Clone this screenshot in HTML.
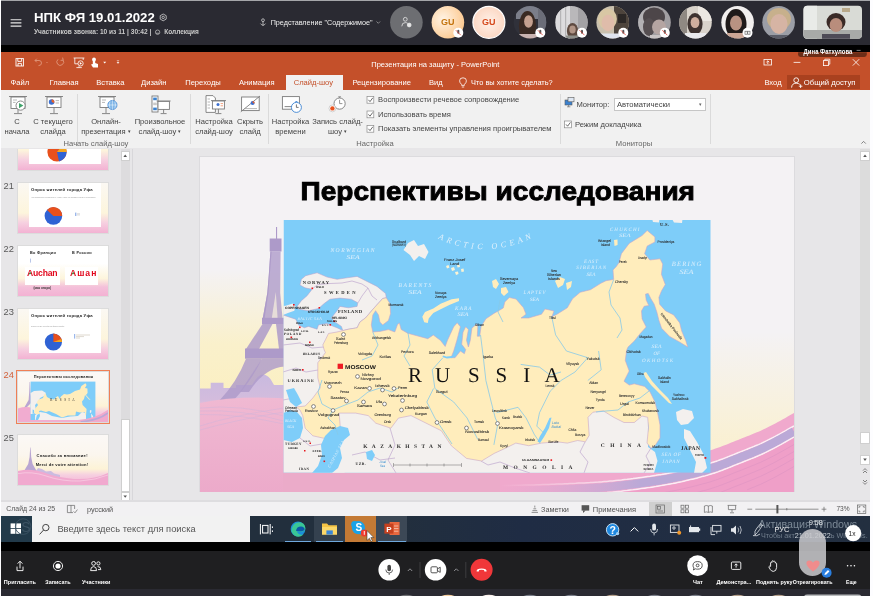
<!DOCTYPE html>
<html lang="ru">
<head>
<meta charset="utf-8">
<title>НПК ФЯ 19.01.2022</title>
<style>
html,body{margin:0;padding:0;}
body{width:873px;height:596px;overflow:hidden;background:#000;font-family:"Liberation Sans",sans-serif;}
#root{position:relative;width:873px;height:596px;overflow:hidden;background:#000;filter:blur(0.45px);}
.a{position:absolute;}
.t{position:absolute;white-space:nowrap;line-height:1;}
.c{text-align:center;}
/* top webinar bar */
#topbar{left:0;top:0;width:870px;height:44.5px;background:#2a2a32;}
#topline{left:1px;top:0;width:869px;height:1.1px;background:#a5a6aa;}
#rstrip{left:870.2px;top:0;width:3px;height:596px;background:#fdfdff;}
#lstrip{left:0;top:0;width:1.1px;height:596px;background:#fdfdff;}
/* powerpoint */
#pptitle{left:1px;top:52.3px;width:869px;height:38.7px;background:#c4502a;}
#ribbon{left:1px;top:90px;width:869px;height:59px;background:#f1f1f1;}
#work{left:1px;top:148px;width:869px;height:354px;background:#e7e6e8;}
#status{left:1px;top:502px;width:869px;height:15px;background:#f2f1f3;}
#taskbar{left:1px;top:516px;width:869px;height:26px;background:linear-gradient(to right,#222f3d 0%,#222f3d 45%,#1f2c44 60%,#232f40 100%);}
#botbar{left:1px;top:550.5px;width:869px;height:38.5px;background:#1f1f21;}
#botstrip{left:1px;top:588.7px;width:869px;height:8px;background:#2a2a32;}
.rt{font-size:7.6px;color:#444;}
.tab{font-size:7.6px;color:#fff;top:79px;}
.sep{position:absolute;width:1px;background:#dadada;top:94px;height:50px;}
.num{font-size:9.3px;color:#5a5a5a;left:3.6px;}
.thumb{position:absolute;left:19px;width:88px;height:50px;background:#fff;overflow:hidden;}
.bl{font-size:6.6px;color:#fff;top:578px;font-weight:bold;letter-spacing:-0.3px}
.sea{font-family:"Liberation Serif",serif;font-style:italic;fill:#dff0fc;}
.cty{font-family:"Liberation Serif",serif;font-weight:bold;fill:#2a2a2a;}
.cap{font-family:"Liberation Sans",sans-serif;font-weight:bold;fill:#111;}
.cit{font-family:"Liberation Sans",sans-serif;fill:#2a2a2a;stroke:#2a2a2a;stroke-width:0.08px;}
.lake{font-family:"Liberation Sans",sans-serif;font-style:italic;fill:#3a8fd0;}
.rus{font-family:"Liberation Serif",serif;fill:#111;}
.thumb{left:18px;width:89.5px;height:50px;outline:0.5px solid #dcdcdc;}
.tb{background:linear-gradient(to bottom,#fbf8f3 0%,#fdf5dc 60%,#f6cfe0 80%,#f3b2d3 100%);}
.tb2{background:linear-gradient(to bottom,#fff 0%,#fff 35%,#fdf5dc 65%,#f4c0da 82%,#f3b2d3 100%);}
.tb3{background:linear-gradient(to bottom,#fbf8f6 0%,#fbf6ee 40%,#fdf3d6 68%,#f6cfe0 80%,#f3b2d3 100%);}
</style>
</head>
<body>
<div id="root">
<div class="a" id="topbar"></div>
<div class="a" id="pptitle"></div>
<div class="a" id="ribbon"></div>
<div class="a" id="work"></div>
<div class="a" id="status"></div>
<div class="a" id="taskbar"></div>
<div class="a" id="botbar"></div>
<div class="a" id="botstrip"></div>
<!--TOPBAR-->
<svg class="a" style="left:0;top:0" width="873" height="60" viewBox="0 0 873 60">
<g stroke="#e8e8e8" stroke-width="1.1"><path d="M10.6 19.7 H21.4 M10.6 22.9 H21.4 M10.6 26.1 H21.4"/></g>
<g fill="none" stroke="#d0d0d0" stroke-width="0.8"><path d="M163.2 14 L166.2 15.7 L166.2 19.1 L163.2 20.8 L160.2 19.1 L160.2 15.7 Z"/><circle cx="163.2" cy="17.4" r="1.2"/></g>
<g fill="none" stroke="#c8c8c8" stroke-width="0.7"><circle cx="157.6" cy="32.2" r="2.2"/><path d="M156 33.2 H159"/></g>
<g fill="none" stroke="#e0e0e0" stroke-width="0.7"><circle cx="263" cy="20.2" r="1.4"/><path d="M263 21.6 V25.6 M260.5 23.6 Q263 27 265.5 23.6"/></g>
<path d="M376.5 21.5 L378.3 23.3 L380.1 21.5" stroke="#aaa" stroke-width="0.7" fill="none"/>
<defs>
<radialGradient id="gu1" cx="0.35" cy="0.4" r="0.7"><stop offset="0" stop-color="#fff3e4"/><stop offset="1" stop-color="#fcc88e"/></radialGradient>
<radialGradient id="gu2" cx="0.5" cy="0.5" r="0.6"><stop offset="0" stop-color="#fff1e8"/><stop offset="1" stop-color="#fbd3bd"/></radialGradient>
<clipPath id="av1"><circle cx="530" cy="22.3" r="16.3"/></clipPath>
<clipPath id="av2"><circle cx="571.4" cy="22.3" r="16.3"/></clipPath>
<clipPath id="av3"><circle cx="612.7" cy="22.3" r="16.3"/></clipPath>
<clipPath id="av4"><circle cx="654.5" cy="22.3" r="16.3"/></clipPath>
<clipPath id="av5"><circle cx="695.5" cy="22.3" r="16.3"/></clipPath>
<clipPath id="av6"><circle cx="737.6" cy="22.3" r="16.3"/></clipPath>
<clipPath id="av7"><circle cx="778.6" cy="22.3" r="16.3"/></clipPath>
<clipPath id="av8"><rect x="803.5" y="5.7" width="58.5" height="33" rx="4"/></clipPath>
</defs>
<circle cx="406.4" cy="22.3" r="16.3" fill="#6d6e72"/>
<g fill="none" stroke="#e8e8e8" stroke-width="0.8"><circle cx="405.3" cy="19.3" r="1.9"/><path d="M401.8 26.3 Q401.8 22.6 405.3 22.6 Q407 22.6 407.8 23.4"/><circle cx="409.2" cy="25" r="1.9" fill="#e8e8e8"/></g>
<circle cx="447.9" cy="22.3" r="16.3" fill="url(#gu1)"/>
<circle cx="488.9" cy="22.3" r="16" fill="url(#gu2)" stroke="#fff" stroke-width="1.2"/>
<!-- photo avatars -->
<g clip-path="url(#av1)"><rect x="513" y="5" width="34" height="35" fill="#30313a"/><rect x="516" y="5" width="31" height="14" fill="#7b7e8a"/><rect x="538" y="5" width="10" height="30" fill="#6b6d78"/><ellipse cx="527.5" cy="26" rx="8.6" ry="15" fill="#3a2a23"/><ellipse cx="528.5" cy="21.5" rx="4.4" ry="6.2" fill="#c5a190"/><rect x="519" y="34" width="18" height="7" fill="#c9b3b0"/></g>
<g clip-path="url(#av2)"><rect x="554" y="5" width="35" height="35" fill="#b9b8ba"/><rect x="556" y="5" width="14" height="35" fill="#dddcde"/><rect x="560" y="5" width="1.2" height="35" fill="#b5b4b6"/><rect x="565" y="5" width="1.2" height="35" fill="#b5b4b6"/><rect x="578" y="5" width="11" height="35" fill="#a3a2a5"/><ellipse cx="572.5" cy="31" rx="5.6" ry="8" fill="#5e4a40"/><ellipse cx="572.5" cy="29.5" rx="3.2" ry="4" fill="#b09485"/><rect x="566" y="35.5" width="13" height="4" fill="#8d8f8a"/></g>
<g clip-path="url(#av3)"><rect x="595" y="5" width="35" height="35" fill="#c9c0ae"/><rect x="614" y="5" width="16" height="35" fill="#4d443c"/><rect x="618" y="14" width="8" height="9" fill="#2c2826"/><ellipse cx="607.5" cy="19" rx="9.4" ry="10.5" fill="#d8c7a4"/><ellipse cx="608" cy="23" rx="6.4" ry="8.2" fill="#dfbcaa"/><rect x="598" y="33.5" width="22" height="7" fill="#dfe4ee"/></g>
<g clip-path="url(#av4)"><rect x="637" y="5" width="35" height="35" fill="#a29fa2"/><rect x="637" y="5" width="12" height="35" fill="#b3b1b4"/><ellipse cx="654" cy="17" rx="11" ry="9.5" fill="#4d4649"/><ellipse cx="649" cy="27" rx="6" ry="9" fill="#554e51"/><ellipse cx="659" cy="27" rx="7" ry="7.6" fill="#b5a5a2"/><rect x="650" y="35" width="20" height="5" fill="#c9c4c4"/></g>
<g clip-path="url(#av5)"><rect x="678" y="5" width="35" height="35" fill="#d9d3cb"/><rect x="678" y="5" width="9" height="35" fill="#8f8983"/><rect x="698" y="5" width="15" height="16" fill="#ece8e2"/><ellipse cx="695" cy="24" rx="7.6" ry="11" fill="#3d3230"/><ellipse cx="695" cy="22.5" rx="4.4" ry="5.6" fill="#cfae9e"/><rect x="685" y="33" width="21" height="8" fill="#e9e9ec"/></g>
<g clip-path="url(#av6)"><rect x="720" y="5" width="36" height="35" fill="#f1efee"/><ellipse cx="736" cy="24" rx="10.5" ry="15" fill="#1f1a1a"/><ellipse cx="736" cy="23" rx="6" ry="7.6" fill="#b99282"/><rect x="727" y="33" width="18" height="8" fill="#caa595"/></g>
<g clip-path="url(#av7)"><rect x="761" y="5" width="36" height="35" fill="#9b9ea6"/><ellipse cx="779" cy="19" rx="12" ry="11" fill="#c7b08c"/><ellipse cx="779" cy="24" rx="8.6" ry="10" fill="#d6b4a4"/><rect x="766" y="35" width="26" height="6" fill="#5a5d68"/></g>
<g clip-path="url(#av8)"><rect x="803" y="5" width="60" height="34" fill="#d9dbd6"/><rect x="803" y="5" width="14" height="34" fill="#e9ebe8"/><rect x="842" y="8" width="8" height="4" fill="#b9a98a"/><rect x="803" y="30" width="60" height="9" fill="#a8aaa8"/><ellipse cx="836" cy="22" rx="9.5" ry="9" fill="#3a2a26"/><ellipse cx="836" cy="25" rx="6.4" ry="7" fill="#b98d7c"/><rect x="822" y="34" width="28" height="6" fill="#4e4b57"/></g>
<!-- mute badges -->
<g fill="#fff"><circle cx="458.3" cy="32.7" r="5"/><circle cx="540.3" cy="32.7" r="5"/><circle cx="582" cy="32.7" r="5"/><circle cx="623.3" cy="32.7" r="5"/><circle cx="664.8" cy="32.7" r="5"/><circle cx="747.5" cy="32.7" r="5"/></g>
<g fill="#555"><rect x="457.3" y="29.8" width="2" height="4" rx="1"/><rect x="539.3" y="29.8" width="2" height="4" rx="1"/><rect x="581" y="29.8" width="2" height="4" rx="1"/><rect x="622.3" y="29.8" width="2" height="4" rx="1"/><rect x="663.8" y="29.8" width="2" height="4" rx="1"/></g>
<g stroke="#e0453a" stroke-width="0.8"><path d="M455.8 30.2 L460.8 35.2 M537.8 30.2 L542.8 35.2 M579.5 30.2 L584.5 35.2 M620.8 30.2 L625.8 35.2 M662.3 30.2 L667.3 35.2"/></g>
<g fill="none" stroke="#555" stroke-width="0.6"><rect x="745" y="31.2" width="2.2" height="3"/><rect x="747.8" y="31.2" width="2.2" height="3"/></g>
<!-- tooltip -->
<path d="M798.1 52.3 H866.8 V54.6 Q866.8 57 864.4 57 H800.5 Q798.1 57 798.1 54.6 Z" fill="#6b2d17"/>
<text x="803.6" y="53.9" font-family="'Liberation Sans',sans-serif" font-weight="bold" font-size="7" fill="#fff" textLength="48.8" lengthAdjust="spacingAndGlyphs">Дина Фатхулова</text>
<path d="M856.6 50.4 H860.6" stroke="#ccc" stroke-width="0.6"/>
</svg>
<div class="t" style="left:34px;top:11.2px;font-size:13.2px;font-weight:bold;color:#fff;">НПК ФЯ 19.01.2022</div>
<div class="t" style="left:34px;top:29px;font-size:6.6px;font-weight:bold;color:#c9c9c9;">Участников звонка: 10 из 11 | 30:42 |</div>
<div class="t" style="left:164.3px;top:29px;font-size:6.5px;font-weight:bold;color:#c9c9c9;">Коллекция</div>
<div class="t" style="left:270.7px;top:19px;font-size:7.2px;color:#f0f0f0;">Представление "Содержимое"</div>
<div class="t" style="left:441px;top:17.6px;font-size:9px;font-weight:bold;color:#c4740e;">GU</div>
<div class="t" style="left:482px;top:17.6px;font-size:9px;font-weight:bold;color:#d5491c;">GU</div>
<!--/TOPBAR-->
<!--PPT-->
<div class="a" style="left:285.6px;top:74.7px;width:57.2px;height:16px;background:#f1f1f1;"></div>
<div class="a" style="left:787.4px;top:75.2px;width:73px;height:14px;background:#a9411f;"></div>
<div class="t" style="left:371.3px;top:60.5px;font-size:7.5px;color:#fff;">Презентация на защиту - PowerPoint</div>
<div class="t tab" style="left:10.6px;">Файл</div>
<div class="t tab" style="left:49.6px;">Главная</div>
<div class="t tab" style="left:96.3px;">Вставка</div>
<div class="t tab" style="left:141px;">Дизайн</div>
<div class="t tab" style="left:185.2px;">Переходы</div>
<div class="t tab" style="left:239px;">Анимация</div>
<div class="t tab" style="left:293.7px;color:#c4502a;">Слайд-шоу</div>
<div class="t tab" style="left:352.4px;">Рецензирование</div>
<div class="t tab" style="left:428.9px;">Вид</div>
<div class="t tab" style="left:471px;font-size:7.4px;top:79.2px">Что вы хотите сделать?</div>
<div class="t tab" style="left:764.4px;">Вход</div>
<div class="t tab" style="left:803.8px;font-size:7.7px;">Общий доступ</div>
<svg class="a" style="left:0;top:53px" width="873" height="38" viewBox="0 53 873 38">
<!-- quick access -->
<g fill="none" stroke="#fff" stroke-width="0.9"><rect x="16" y="58.6" width="7.4" height="7.4"/><path d="M17.8 58.6 V61.4 H21.6 V58.6 M18 66 V63.4 H21.4 V66"/></g>
<g fill="none" stroke="#e0967a" stroke-width="0.9"><path d="M35 60.5 H39 Q41.5 60.5 41.5 63 Q41.5 65.6 38.5 65.6 M35 60.5 L36.8 58.7 M35 60.5 L36.8 62.3"/><path d="M63 60 A3.4 3.4 0 1 1 58 59.4 M62.6 57.6 L63.2 60.2 L60.6 60.4"/></g>
<circle cx="47" cy="62.5" r="0.6" fill="#e0967a"/>
<g fill="none" stroke="#fff" stroke-width="0.8"><path d="M73.6 58 H84.4 M74.8 58 V63.8 H78 M83.2 58 V60"/><circle cx="80.6" cy="63.4" r="2.6"/><path d="M79.8 62 L82 63.4 L79.8 64.8 Z" fill="#fff" stroke="none"/><path d="M79 66.2 V67.4 M76.4 67.6 H81.8"/></g>
<g fill="#fff"><circle cx="94" cy="59.4" r="1.9"/><path d="M92.8 60.5 H95.2 V63 L98 64 V67.6 H93 L91 64.6 L92.8 64 Z"/></g>
<path d="M103.2 61.8 L106.2 61.8 L104.7 63.5 Z" fill="#fff"/>
<path d="M116.8 60.6 H119.2 M117 62.2 L118 63.4 L119 62.2 Z" stroke="#fff" stroke-width="0.5" fill="#fff"/>
<!-- lightbulb -->
<g fill="none" stroke="#fff" stroke-width="0.8"><path d="M461.6 85.4 V84.4 Q459.6 82.8 459.6 80.8 Q459.6 77.8 463 77.8 Q466.4 77.8 466.4 80.8 Q466.4 82.8 464.4 84.4 V85.4 Z M461.8 87 H464.2"/></g>
<!-- window buttons -->
<g fill="none" stroke="#fff" stroke-width="0.8"><rect x="764" y="59.4" width="7.6" height="5.6"/><path d="M767.8 64 V61 M766.4 62.2 L767.8 60.8 L769.2 62.2"/><path d="M793.6 62.4 H800.4"/><rect x="823.4" y="60.6" width="5" height="5"/><path d="M824.8 60.6 V59.2 H829.8 V64.2 H828.4"/><path d="M852.8 59.2 L859.2 65.6 M859.2 59.2 L852.8 65.6"/></g>
<!-- share icon -->
<g fill="none" stroke="#fff" stroke-width="0.9"><circle cx="796.2" cy="80.2" r="2.4"/><path d="M791.6 87.6 Q791.8 83.2 796.2 83.2 Q798.6 83.2 799.8 84.4 M798.8 86.2 H802.4 M800.6 84.4 V88"/></g>
</svg>
<!--/PPT-->
<!--RIBBON-->
<div class="sep" style="left:76.7px"></div><div class="sep" style="left:190.4px"></div><div class="sep" style="left:267.8px"></div><div class="sep" style="left:560px"></div><div class="sep" style="left:710px"></div>
<div class="t rt c" style="left:-3px;width:40px;top:118px;">С</div>
<div class="t rt c" style="left:-3px;width:40px;top:128.4px;">начала</div>
<div class="t rt c" style="left:28px;width:50px;top:118px;">С текущего</div>
<div class="t rt c" style="left:28px;width:50px;top:128.4px;">слайда</div>
<div class="t rt c" style="left:76px;width:60px;top:118px;">Онлайн-</div>
<div class="t rt c" style="left:76px;width:60px;top:128.4px;">презентация <span style="font-size:5px;vertical-align:1px">▾</span></div>
<div class="t rt c" style="left:130px;width:60px;top:118px;">Произвольное</div>
<div class="t rt c" style="left:130px;width:60px;top:128.4px;">слайд-шоу <span style="font-size:5px;vertical-align:1px">▾</span></div>
<div class="t rt c" style="left:189px;width:50px;top:118px;">Настройка</div>
<div class="t rt c" style="left:189px;width:50px;top:128.4px;">слайд-шоу</div>
<div class="t rt c" style="left:230px;width:40px;top:118px;">Скрыть</div>
<div class="t rt c" style="left:230px;width:40px;top:128.4px;">слайд</div>
<div class="t rt c" style="left:265.5px;width:50px;top:118px;">Настройка</div>
<div class="t rt c" style="left:265.5px;width:50px;top:128.4px;">времени</div>
<div class="t rt c" style="left:307.5px;width:60px;top:118px;">Запись слайд-</div>
<div class="t rt c" style="left:307.5px;width:60px;top:128.4px;">шоу <span style="font-size:5px;vertical-align:1px">▾</span></div>
<div class="t rt" style="left:378.1px;top:96.2px;">Воспроизвести речевое сопровождение</div>
<div class="t rt" style="left:378.1px;top:110.7px;">Использовать время</div>
<div class="t rt" style="left:378.1px;top:125.2px;">Показать элементы управления проигрывателем</div>
<div class="t rt" style="left:576.4px;top:101.2px;">Монитор:</div>
<div class="a" style="left:613.5px;top:98px;width:92px;height:13.4px;background:#fff;border:0.6px solid #c6c6c6;box-sizing:border-box;"></div>
<div class="t rt" style="left:617px;top:101.2px;">Автоматически</div>
<div class="t rt" style="left:699px;top:101.5px;font-size:5px;color:#666">▾</div>
<div class="t rt" style="left:575px;top:120.7px;">Режим докладчика</div>
<div class="t rt c" style="left:56px;width:80px;top:140.4px;color:#666;">Начать слайд-шоу</div>
<div class="t rt c" style="left:345px;width:60px;top:140.4px;color:#666;">Настройка</div>
<div class="t rt c" style="left:604px;width:60px;top:140px;color:#666;">Мониторы</div>
<svg class="a" style="left:0;top:90px" width="873" height="59" viewBox="0 90 873 59">
<!-- checkboxes -->
<g fill="#fff" stroke="#8a8a8a" stroke-width="0.7"><rect x="367" y="96.4" width="6.8" height="6.8"/><rect x="367" y="111" width="6.8" height="6.8"/><rect x="367" y="125.4" width="6.8" height="6.8"/><rect x="564.6" y="121" width="6.8" height="6.8"/></g>
<g fill="none" stroke="#444" stroke-width="0.8"><path d="M368.4 99.8 L370 101.6 L372.8 97.8 M368.4 114.4 L370 116.2 L372.8 112.4 M368.4 128.8 L370 130.6 L372.8 126.8 M566 124.4 L567.6 126.2 L570.4 122.4"/></g>
<!-- icon 1: from beginning -->
<g fill="#fff" stroke="#7a7a7a" stroke-width="0.9">
<path d="M9 96.5 H27"/><rect x="11" y="97" width="14" height="11.5"/><path d="M18 108.5 V113 M14 113.6 H22"/>
<circle cx="20.6" cy="105.6" r="4.6"/>
</g>
<path d="M19 103 L23.4 105.6 L19 108.2 Z" fill="#3fa36b"/>
<path d="M13 100 H17 M13 102.4 H15.6" stroke="#9a9a9a" stroke-width="0.7"/>
<!-- icon 2 -->
<g fill="#fff" stroke="#7a7a7a" stroke-width="0.9"><path d="M45 96.5 H63"/><rect x="47" y="97" width="14" height="10.5"/><path d="M54 107.5 V113 M50 113.6 H58"/></g>
<circle cx="51.6" cy="102" r="2.8" fill="#3b6fd0"/><path d="M51.6 102 L51.6 99.2 A2.8 2.8 0 0 1 54.2 103 Z" fill="#e8632a"/>
<path d="M55.6 100.6 H59 M55.6 103 H59" stroke="#9a9a9a" stroke-width="0.7"/>
<!-- icon 3 -->
<g fill="#fff" stroke="#7a7a7a" stroke-width="0.9"><path d="M98 96.5 H116"/><rect x="100" y="97" width="14" height="10.5"/><path d="M106 107.5 V113 M102 113.6 H110"/></g>
<path d="M102 100 H106 M102 102.4 H105" stroke="#9a9a9a" stroke-width="0.7"/>
<circle cx="112.4" cy="105" r="4.6" fill="#7fb6e8" stroke="#3b82d0" stroke-width="0.7"/><path d="M107.8 105 H117 M112.4 100.4 V109.6 M110 101.4 Q108.6 105 110 108.6 M114.8 101.4 Q116.2 105 114.8 108.6" stroke="#fff" stroke-width="0.5" fill="none"/>
<!-- icon 4 -->
<g fill="#fff" stroke="#7a7a7a" stroke-width="0.9"><rect x="152" y="96" width="6" height="16"/><path d="M156.6 101 H170.6"/><rect x="158" y="101.4" width="11.4" height="8"/><path d="M163.6 109.4 V113 M160.6 113.6 H166.6"/></g>
<rect x="153.2" y="97.6" width="3.6" height="2.6" fill="#3b82d0"/><rect x="153.2" y="107.6" width="3.6" height="2.6" fill="#3b82d0"/><rect x="153.2" y="102.6" width="3.6" height="2.6" fill="#c9c9c9"/>
<!-- icon 5: setup -->
<g fill="#fff" stroke="#7a7a7a" stroke-width="0.9"><path d="M206 95.6 H213 L215.4 98 V112.4 H206 Z"/><path d="M211 100.6 H226"/><rect x="212.4" y="101" width="12" height="8"/><path d="M218.4 109 V113 M215.4 113.6 H221.4"/></g>
<path d="M207.6 99 H210 M207.6 102 H210 M207.6 105 H210 M207.6 108 H210" stroke="#9a9a9a" stroke-width="0.7"/>
<circle cx="218" cy="104.6" r="1.5" fill="#3b6fd0"/><path d="M220.6 103.6 H223 M220.6 105.8 H223" stroke="#e8632a" stroke-width="0.6"/>
<!-- icon 6: hide slide -->
<g fill="#fff" stroke="#7a7a7a" stroke-width="0.9"><rect x="241.6" y="97" width="17.6" height="13.6"/><path d="M240.8 111.8 L260 96" fill="none"/></g>
<path d="M244 108.6 H257" stroke="#9a9a9a" stroke-width="0.7"/><circle cx="252.6" cy="103" r="2" fill="#3b6fd0"/><path d="M252.6 103 V101 A2 2 0 0 1 254.5 103.6 Z" fill="#e8632a"/>
<!-- icon 7: rehearse -->
<g fill="#fff" stroke="#7a7a7a" stroke-width="0.9"><rect x="282.4" y="96.6" width="17" height="12.6"/><path d="M284.6 106.6 H293" fill="none"/></g>
<circle cx="296.4" cy="107.4" r="5" fill="#fff" stroke="#3b82d0" stroke-width="0.9"/><path d="M296.4 104.4 V107.4 H298.6" stroke="#555" stroke-width="0.8" fill="none"/><path d="M295.4 101.6 H297.4" stroke="#3b82d0" stroke-width="0.9"/>
<!-- icon 8: record -->
<circle cx="339.6" cy="103.6" r="5.6" fill="#fff" stroke="#7a7a7a" stroke-width="0.9"/><path d="M339.6 99.8 V103.6 H342.4 M338.2 96.8 H341 M339.6 96.8 V98" stroke="#7a7a7a" stroke-width="0.8" fill="none"/>
<circle cx="332.4" cy="108.4" r="3.4" fill="#fff" stroke="#aaa" stroke-width="0.5"/><circle cx="332.4" cy="108.4" r="2.2" fill="#e8531f"/>
<!-- monitor icon -->
<g stroke="#5a5a5a" stroke-width="0.6"><rect x="565" y="100" width="7" height="5" fill="#3b82d0"/><rect x="568" y="97.6" width="6" height="4.2" fill="#dfe8f4"/><path d="M567 106.8 H570.4 M568.6 105 V106.8" fill="none"/></g>
<path d="M861.4 143.6 L863.6 141.4 L865.8 143.6" stroke="#666" stroke-width="0.8" fill="none"/>
</svg>
<!--/RIBBON-->
<!--PANEL-->
<div class="a" style="left:120.5px;top:149px;width:9.5px;height:352px;background:#dddcde;"></div>
<div class="a" style="left:120.5px;top:151px;width:9.5px;height:9.5px;background:#fff;border:0.5px solid #cfcfcf;box-sizing:border-box;"></div>
<div class="a" style="left:120.5px;top:418.6px;width:9.5px;height:73px;background:#fff;border:0.5px solid #cfcfcf;box-sizing:border-box;"></div>
<div class="a" style="left:120.5px;top:492px;width:9.5px;height:9px;background:#fff;border:0.5px solid #cfcfcf;box-sizing:border-box;"></div>
<div class="a" style="left:131.6px;top:149px;width:1px;height:353px;background:#d8d7da;"></div>
<svg class="a" style="left:120px;top:149px" width="11" height="353" viewBox="120 149 11 353"><path d="M123.4 157 L125.2 154.6 L127 157 Z M123.4 495.4 L125.2 497.8 L127 495.4 Z" fill="#555"/></svg>
<div class="t num" style="top:181.6px;">21</div><div class="t num" style="top:244.6px;">22</div><div class="t num" style="top:307.6px;">23</div><div class="t num" style="top:370.6px;color:#d2603a;">24</div><div class="t num" style="top:433.6px;">25</div>
<!-- 20 -->
<div class="a" style="left:0;top:149px;width:120px;height:30px;overflow:hidden;"><div class="thumb tb" style="top:-29.4px;"><div class="a" style="left:11px;top:0;width:72px;height:44px;background:#fff;"></div>
<svg class="a" style="left:0;top:0" width="89" height="50" viewBox="0 0 89 50"><circle cx="39" cy="32" r="9.6" fill="#e8501c"/><path d="M39 32 L48.6 32 A9.6 9.6 0 0 1 41 41.4 Z" fill="#2f62d4"/><path d="M39 32 L45 24.6 A9.6 9.6 0 0 1 48.6 32 Z" fill="#f2a51e"/></svg></div></div>
<!-- 21 -->
<div class="thumb tb" style="top:182.6px;"><div class="a" style="left:11px;top:0;width:72px;height:44.6px;background:#fff;"></div>
<div class="t" style="left:13px;top:5.4px;font-size:4.2px;font-weight:bold;color:#222;letter-spacing:0.2px;">Опрос жителей города Уфа</div>
<div class="t" style="left:13px;top:14.6px;font-size:1.8px;color:#999;">Что привлекает россиянина в Ашане, какие его преимущества и недостатки?</div>
<svg class="a" style="left:0;top:0" width="89" height="50" viewBox="0 0 89 50"><circle cx="35.4" cy="33" r="8.8" fill="#2f62d4"/><path d="M35.4 33 L29 27 A8.8 8.8 0 0 1 44.2 33 Z" fill="#e8501c"/><rect x="57" y="29.6" width="1.4" height="3.4" fill="#9bb7ea"/><rect x="59" y="30" width="3" height="2.6" fill="#e4e4e4"/></svg></div>
<!-- 22 -->
<div class="thumb tb2" style="top:245.6px;">
<div class="a" style="left:7px;top:21px;width:35px;height:18px;background:#fff;"></div><div class="a" style="left:47px;top:21px;width:33px;height:18px;background:#fff;"></div>
<div class="t" style="left:12px;top:6.4px;font-size:3.8px;font-weight:bold;color:#222;letter-spacing:0.3px;">Во Франции</div>
<div class="t" style="left:54px;top:6.4px;font-size:3.8px;font-weight:bold;color:#222;letter-spacing:0.3px;">В России</div>
<div class="t" style="left:9px;top:23.4px;font-size:8.6px;font-weight:bold;color:#e2061c;letter-spacing:-0.2px;">Auchan</div>
<div class="t" style="left:52px;top:23.4px;font-size:8.6px;font-weight:bold;color:#e2061c;letter-spacing:1px;">Ашан</div>
<div class="t" style="left:15.4px;top:41.2px;font-size:3px;font-weight:bold;color:#333;">(моя опора)</div>
<svg class="a" style="left:0;top:0" width="89" height="50" viewBox="0 0 89 50"><path d="M10.4 28.6 L12.6 25.6 L13 28 Z M53.4 28.6 L55.6 25.6 L56 28 Z" fill="#3f9a4b"/><rect x="12.4" y="12.6" width="0.6" height="4" fill="#8aa0d8"/></svg></div>
<!-- 23 -->
<div class="thumb tb" style="top:308.6px;"><div class="a" style="left:11px;top:0;width:72px;height:44px;background:#fff;"></div>
<div class="t" style="left:13px;top:5.4px;font-size:4.2px;font-weight:bold;color:#222;letter-spacing:0.2px;">Опрос жителей города Уфа</div>
<div class="t" style="left:13px;top:17px;font-size:1.8px;color:#999;">Готовы ли вы перейти на французский?</div>
<svg class="a" style="left:0;top:0" width="89" height="50" viewBox="0 0 89 50"><circle cx="35.4" cy="33" r="8.6" fill="#2f62d4"/><path d="M35.4 33 L35.4 24.4 A8.6 8.6 0 0 1 44 33 Z" fill="#e8501c"/><path d="M35.4 33 L43.4 30 A8.6 8.6 0 0 1 44 33 Z" fill="#f2a51e"/><rect x="56" y="25" width="1.2" height="4.6" fill="#9bb7ea"/><path d="M58 26 H72 M58 27.6 H66 M58 29 H62" stroke="#c9c0b0" stroke-width="0.6"/></svg></div>
<!-- 24 selected -->
<div class="a" style="left:16px;top:370px;width:93.5px;height:54px;background:#ef7f55;"></div>
<div class="thumb tb3" style="top:371.8px;left:17.8px;width:90px;height:50.4px;">
<div class="t" style="left:16px;top:3.4px;font-size:3.9px;font-weight:bold;color:#222;letter-spacing:0.2px;">Перспективы исследования</div>
<svg class="a" style="left:0;top:0" width="90" height="50.4" viewBox="0 0 90 50.4">
<path d="M11.6 10 L12 10 L12.6 22 L14 30 L8 36 L6 36 L10.6 28 L11.2 20 Z" fill="#b9a6d2"/>
<path d="M0 36.6 Q8 34 14 36 L14 50.4 L0 50.4 Z" fill="#f1acd0"/>
<rect x="12.6" y="9.6" width="64.8" height="38.4" fill="#7ecdf9"/>
<path d="M12.6 21 L16 19 L24 18.4 L28 21 L26 24 L22 26 L20 30 L17 33 L18 38 L16 42 L12.6 42 Z" fill="#f3f0ee"/>
<path d="M17 43 L22 40 L28 41 L34 44 L44 46 L52 44.6 L60 44 L64 40 L68 41 L68 48 L17 48 Z" fill="#f3f0ee"/>
<path d="M27.6 21.4 L29 25 L31.6 26.6 L36 27.4 L38.4 25 L40 24 L41.6 27 L43 24.6 L46 22 L49 22.6 L52 22 L57 19 L62 17.4 L63.4 14 L67.4 11.2 L68.6 13 L67 16 L69.4 16.6 L69.6 21 L68 23 L72.6 28 L71 27.6 L67 23 L66 27 L64 29.6 L64.6 33 L68.6 37 L68 43.6 L67 43 L67 40 L62 40.6 L58 39.6 L57.4 43.4 L50 43.6 L44 45.6 L38 42 L31 39 L28 40 L23 38.6 L21 39 L21.6 42 L17 42 L16 39.6 L17.6 36 L20 33 L18.6 30.6 L20.6 27.6 L25 26 L26 23 Z" fill="#ffedbc"/>
<path d="M14.6 37.4 L16 38 L16 41.6 L14.6 42 Z M19 43 L21.6 41.6 L22 44 L20 48 L17.6 48 Z" fill="#7ecdf9"/>
<path d="M72 38 L73.6 38.6 L73 41 L71.8 40.4 Z M73 41.6 L75 44 L75.6 47 L74 48 L73.4 45 Z" fill="#f3f0ee"/>
<path d="M60 48 Q78 46.6 90 37.8 L90 50.4 L60 50.4 Z" fill="#f0a9cd"/><path d="M62 50 Q80 48.6 90 41" stroke="#bca8d6" stroke-width="1.6" fill="none"/>
<rect x="12.6" y="48" width="50" height="2.4" fill="#f1aed0"/>
</svg>
<div class="t" style="left:32.4px;top:27.6px;font-size:3.2px;font-family:'Liberation Serif',serif;color:#222;letter-spacing:2.6px;">RUSSIA</div>
</div>
<!-- 25 -->
<div class="thumb tb3" style="top:434.6px;left:17.8px;width:90px;height:50.6px;">
<svg class="a" style="left:0;top:0" width="90" height="50.6" viewBox="0 0 90 50.6">
<path d="M12.2 12.6 L12.6 12.6 L13.2 22 L14.6 29 L18.6 36 L6 36 L10.2 29 L11.6 22 Z" fill="#b9a6d2"/>
<path d="M18 36 L20 33 L24 34 L28 36.6 L33 36 L36 38.6 L42 40 L42 44 L18 44 Z" fill="#cbbbe0"/>
<path d="M0 36 Q14 33 26 37.6 Q40 43 56 44 Q76 45 90 38 L90 50.6 L0 50.6 Z" fill="#f1a9cf"/>
<path d="M0 38.6 Q14 36 28 41 Q44 46.6 62 46 Q78 45 90 40" stroke="#f7cde2" stroke-width="0.8" fill="none"/>
</svg>
<div class="t" style="left:18.6px;top:19.8px;font-size:4.1px;font-weight:bold;color:#222;letter-spacing:0.3px;">Спасибо за внимание!</div>
<div class="t" style="left:17.9px;top:28px;font-size:4.1px;font-weight:bold;color:#222;letter-spacing:0.2px;">Merci de votre attention!</div>
</div>
<div class="a" style="left:860px;top:149px;width:10px;height:310px;background:#dcdcdc;"></div>
<div class="a" style="left:860.4px;top:151px;width:9.2px;height:9.5px;background:#fff;border:0.5px solid #cfcfcf;box-sizing:border-box;"></div>
<div class="a" style="left:860.4px;top:431.5px;width:9.2px;height:12px;background:#fff;border:0.5px solid #cfcfcf;box-sizing:border-box;"></div>
<div class="a" style="left:860.4px;top:455px;width:9.2px;height:9.5px;background:#fff;border:0.5px solid #cfcfcf;box-sizing:border-box;"></div>
<svg class="a" style="left:858px;top:149px" width="13" height="353" viewBox="858 149 13 353"><path d="M863.2 157 L865 154.6 L866.8 157 Z M863.2 458.6 L865 461 L866.8 458.6 Z" fill="#555"/><path d="M863 473 L865 471 L867 473 M863 470.6 L865 468.6 L867 470.6 M863 480 L865 482 L867 480 M863 482.4 L865 484.4 L867 482.4" stroke="#555" stroke-width="0.7" fill="none"/></svg>
<!--/PANEL-->
<!--SLIDE-->
<div class="a" style="left:199.2px;top:156.2px;width:595.8px;height:336.2px;background:#dcdbde;"></div>
<svg class="a" id="slide" text-rendering="geometricPrecision" style="left:200px;top:157px" width="594" height="335" viewBox="200 157 594 335">
<defs>
<linearGradient id="gy" x1="0" y1="0" x2="0" y2="1">
<stop offset="0" stop-color="#fbf0c4" stop-opacity="0"/>
<stop offset="0.55" stop-color="#fbf0c4" stop-opacity="0.85"/>
<stop offset="1" stop-color="#fbefc0" stop-opacity="1"/>
</linearGradient>
<linearGradient id="gy2" x1="0" y1="0" x2="0" y2="1">
<stop offset="0" stop-color="#faf1d2" stop-opacity="0"/>
<stop offset="0.75" stop-color="#faf0d0" stop-opacity="0.9"/>
<stop offset="1" stop-color="#faf0d0" stop-opacity="0.9"/>
</linearGradient>
<linearGradient id="gp" x1="0" y1="0" x2="0" y2="1">
<stop offset="0" stop-color="#f0b9d2"/>
<stop offset="1" stop-color="#ecaaca"/>
</linearGradient>
<linearGradient id="gl" x1="0" y1="0" x2="0" y2="1"><stop offset="0" stop-color="#c9badf"/><stop offset="0.7" stop-color="#d3bcdd"/><stop offset="1" stop-color="#e8bedb"/></linearGradient>
<linearGradient id="glav" gradientUnits="userSpaceOnUse" x1="500" y1="0" x2="640" y2="0"><stop offset="0" stop-color="#d9aad2" stop-opacity="0"/><stop offset="1" stop-color="#bba9d7" stop-opacity="1"/></linearGradient>
<linearGradient id="gwh" gradientUnits="userSpaceOnUse" x1="500" y1="0" x2="640" y2="0"><stop offset="0" stop-color="#fbeef5" stop-opacity="0"/><stop offset="1" stop-color="#fbeef5" stop-opacity="1"/></linearGradient>
<clipPath id="mapclip"><rect x="283.5" y="220" width="427.2" height="252.8"/></clipPath>
</defs>
<rect x="200" y="157" width="594" height="335" fill="#f4f2f4"/>
<rect x="200" y="270" width="90" height="135" fill="url(#gy)"/>
<rect x="705" y="332" width="89" height="143" fill="url(#gy2)"/>
<!-- city silhouette -->
<path d="M200 388.4 L210.7 388.4 L210.7 382.7 L223.5 382.7 L223.5 388 L236 388 L236 385 L252 385 L256 379 Q263 370 270.5 379 L274 385 L290 385 L290 410 L200 410 Z" fill="url(#gl)"/>
<!-- eiffel -->
<g fill="#ad9ac9">
<rect x="276" y="227" width="1.1" height="12"/>
<rect x="269.7" y="238.5" width="11.8" height="13"/>
<path d="M270.4 251.4 L280.6 251.4 L280.2 293 L282.5 318 L262.8 318 L267.3 293 L268.8 275 Z" fill-opacity="0.78"/>
<path d="M270.4 251.4 L271.6 251.4 L269.8 275 L268.4 293 L264.6 318 L262.8 318 L267.3 293 L268.8 275 Z"/>
<path d="M275.8 292 L277.6 318 L271.8 318 Z" fill="#f8f1de" fill-opacity="0.7"/>
<rect x="262" y="317.8" width="23" height="6.2"/>
<path d="M262.5 324 L272.5 324 L259 349 L246 349 Z" fill-opacity="0.85"/>
<path d="M276 324 L285 324 L285 349 L279 349 Z" fill-opacity="0.85"/>
<rect x="245" y="348.5" width="41" height="10.2"/>
<path d="M246 358.7 L262 358.7 Q251 382 233 401 L219 401 Q237 382 246 358.7 Z" fill-opacity="0.82"/>
<path d="M262 358.7 L285 358.7 L285 366.5 Q264 368 249 392 L240 392 Z" fill-opacity="0.82"/>
</g>
<!-- pink ground -->
<path d="M200 403 Q245 394 300 400 L300 492 L200 492 Z" fill="url(#gp)"/>
<g fill="none" stroke="#c9b3dc" stroke-width="0.5" stroke-opacity="0.8"><path d="M200 408 Q240 404 284 416"/><path d="M200 411 Q240 409 284 421"/><path d="M200 414.5 Q240 414 284 424"/><path d="M200 426 Q230 416 284 408"/><path d="M200 430 Q235 420 284 412"/></g>
<rect x="283" y="462" width="428" height="30" fill="#ebabc9"/>
<!-- right bands -->
<path d="M794.0 413.0 L792.1 414.1 L789.9 415.3 L787.7 416.6 L785.4 417.9 L782.9 419.3 L780.4 420.7 L777.9 422.1 L775.3 423.5 L772.8 424.8 L770.2 426.1 L767.8 427.3 L765.4 428.5 L763.1 429.6 L760.8 430.7 L758.5 431.7 L756.2 432.6 L753.9 433.6 L751.6 434.5 L749.4 435.4 L747.1 436.3 L744.8 437.2 L742.6 438.1 L740.3 439.0 L738.0 439.9 L735.7 440.8 L733.5 441.7 L731.3 442.6 L729.1 443.5 L726.9 444.4 L724.7 445.2 L722.5 446.1 L720.2 446.9 L717.9 447.8 L715.5 448.6 L713.0 449.4 L710.5 450.2 L707.9 451.0 L705.2 451.8 L702.4 452.5 L699.5 453.3 L696.6 454.1 L693.7 454.8 L690.7 455.5 L687.7 456.2 L684.8 456.9 L681.8 457.6 L678.9 458.2 L676.0 458.8 L673.1 459.4 L670.3 459.9 L667.4 460.5 L664.6 461.0 L661.7 461.5 L658.9 461.9 L656.0 462.4 L653.2 462.8 L650.3 463.3 L647.4 463.7 L644.6 464.1 L641.7 464.5 L638.8 464.9 L635.9 465.3 L633.0 465.7 L630.1 466.0 L627.2 466.4 L624.3 466.7 L621.4 467.1 L618.5 467.4 L615.6 467.7 L612.7 468.0 L609.9 468.2 L607.0 468.5 L604.1 468.7 L601.3 469.0 L598.4 469.2 L595.6 469.3 L592.7 469.5 L589.9 469.7 L587.1 469.8 L584.2 470.0 L581.4 470.1 L578.6 470.2 L575.8 470.4 L573.0 470.5 L570.2 470.6 L567.5 470.8 L564.8 470.9 L562.2 471.0 L559.5 471.1 L556.9 471.2 L554.2 471.3 L551.5 471.4 L548.7 471.5 L545.9 471.6 L543.0 471.7 L540.0 471.8 L536.9 471.9 L533.7 472.0 L530.5 472.1 L527.2 472.1 L523.8 472.2 L520.4 472.3 L517.0 472.4 L513.6 472.4 L510.2 472.5 L506.7 472.6 L503.4 472.6 L500.0 472.7 L500.0 492 L794.5 492 Z" fill="#f0a9cd"/>
<path d="M794.0 425.9 L792.1 427.0 L789.9 428.2 L787.7 429.5 L785.4 430.8 L782.9 432.2 L780.4 433.6 L777.9 435.0 L775.3 436.4 L772.8 437.7 L770.2 439.0 L767.8 440.2 L765.4 441.4 L763.1 442.5 L760.8 443.6 L758.5 444.6 L756.2 445.5 L753.9 446.5 L751.6 447.4 L749.4 448.3 L747.1 449.2 L744.8 450.1 L742.6 451.0 L740.3 451.9 L738.0 452.8 L735.7 453.7 L733.5 454.6 L731.3 455.5 L729.1 456.4 L726.9 457.3 L724.7 458.1 L722.5 459.0 L720.2 459.8 L717.9 460.7 L715.5 461.5 L713.0 462.3 L710.5 463.1 L707.9 463.9 L705.2 464.7 L702.4 465.4 L699.5 466.2 L696.6 467.0 L693.7 467.7 L690.7 468.4 L687.7 469.1 L684.8 469.8 L681.8 470.5 L678.9 471.1 L676.0 471.7 L673.1 472.3 L670.3 472.8 L667.4 473.4 L664.6 473.9 L661.7 474.4 L658.9 474.8 L656.0 475.3 L653.2 475.7 L650.3 476.2 L647.4 476.6 L644.6 477.0 L641.7 477.4 L638.8 477.8 L635.9 478.2 L633.0 478.6 L630.1 478.9 L627.2 479.3 L624.3 479.6 L621.4 480.0 L618.5 480.3 L615.6 480.6 L612.7 480.9 L609.9 481.1 L607.0 481.4 L604.1 481.6 L601.3 481.9 L598.4 482.1 L595.6 482.2 L592.7 482.4 L589.9 482.6 L587.1 482.7 L584.2 482.9 L581.4 483.0 L578.6 483.1 L575.8 483.3 L573.0 483.4 L570.2 483.5 L567.5 483.7 L564.8 483.8 L562.2 483.9 L559.5 484.0 L556.9 484.1 L554.2 484.2 L551.5 484.3 L548.7 484.4 L545.9 484.5 L543.0 484.6 L540.0 484.7 L536.9 484.8 L533.7 484.9 L530.5 485.0 L527.2 485.0 L523.8 485.1 L520.4 485.2 L517.0 485.3 L513.6 485.3 L510.2 485.4 L506.7 485.5 L503.4 485.5 L500.0 485.6" stroke="url(#gwh)" stroke-width="1.5" fill="none"/>
<path d="M794.0 431.5 L792.1 432.6 L789.9 433.8 L787.7 435.1 L785.4 436.4 L782.9 437.8 L780.4 439.2 L777.9 440.6 L775.3 442.0 L772.8 443.3 L770.2 444.6 L767.8 445.8 L765.4 447.0 L763.1 448.1 L760.8 449.2 L758.5 450.2 L756.2 451.1 L753.9 452.1 L751.6 453.0 L749.4 453.9 L747.1 454.8 L744.8 455.7 L742.6 456.6 L740.3 457.5 L738.0 458.4 L735.7 459.3 L733.5 460.2 L731.3 461.1 L729.1 462.0 L726.9 462.9 L724.7 463.7 L722.5 464.6 L720.2 465.4 L717.9 466.3 L715.5 467.1 L713.0 467.9 L710.5 468.7 L707.9 469.5 L705.2 470.3 L702.4 471.0 L699.5 471.8 L696.6 472.6 L693.7 473.3 L690.7 474.0 L687.7 474.7 L684.8 475.4 L681.8 476.1 L678.9 476.7 L676.0 477.3 L673.1 477.9 L670.3 478.4 L667.4 479.0 L664.6 479.5 L661.7 480.0 L658.9 480.4 L656.0 480.9 L653.2 481.3 L650.3 481.8 L647.4 482.2 L644.6 482.6 L641.7 483.0 L638.8 483.4 L635.9 483.8 L633.0 484.2 L630.1 484.5 L627.2 484.9 L624.3 485.2 L621.4 485.6 L618.5 485.9 L615.6 486.2 L612.7 486.5 L609.9 486.7 L607.0 487.0 L604.1 487.2 L601.3 487.5 L598.4 487.7 L595.6 487.8 L592.7 488.0 L589.9 488.2 L587.1 488.3 L584.2 488.5 L581.4 488.6 L578.6 488.7 L575.8 488.9 L573.0 489.0 L570.2 489.1 L567.5 489.3 L564.8 489.4 L562.2 489.5 L559.5 489.6 L556.9 489.7 L554.2 489.8 L551.5 489.9 L548.7 490.0 L545.9 490.1 L543.0 490.2 L540.0 490.3 L536.9 490.4 L533.7 490.5 L530.5 490.6 L527.2 490.6 L523.8 490.7 L520.4 490.8 L517.0 490.9 L513.6 490.9 L510.2 491.0 L506.7 491.1 L503.4 491.1 L500.0 491.2" stroke="url(#glav)" stroke-width="8.6" fill="none"/>
<path d="M794.0 437.1 L792.1 438.2 L789.9 439.4 L787.7 440.7 L785.4 442.0 L782.9 443.4 L780.4 444.8 L777.9 446.2 L775.3 447.6 L772.8 448.9 L770.2 450.2 L767.8 451.4 L765.4 452.6 L763.1 453.7 L760.8 454.8 L758.5 455.8 L756.2 456.7 L753.9 457.7 L751.6 458.6 L749.4 459.5 L747.1 460.4 L744.8 461.3 L742.6 462.2 L740.3 463.1 L738.0 464.0 L735.7 464.9 L733.5 465.8 L731.3 466.7 L729.1 467.6 L726.9 468.5 L724.7 469.3 L722.5 470.2 L720.2 471.0 L717.9 471.9 L715.5 472.7 L713.0 473.5 L710.5 474.3 L707.9 475.1 L705.2 475.9 L702.4 476.6 L699.5 477.4 L696.6 478.2 L693.7 478.9 L690.7 479.6 L687.7 480.3 L684.8 481.0 L681.8 481.7 L678.9 482.3 L676.0 482.9 L673.1 483.5 L670.3 484.0 L667.4 484.6 L664.6 485.1 L661.7 485.6 L658.9 486.0 L656.0 486.5 L653.2 486.9 L650.3 487.4 L647.4 487.8 L644.6 488.2 L641.7 488.6 L638.8 489.0 L635.9 489.4 L633.0 489.8 L630.1 490.1 L627.2 490.5 L624.3 490.8 L621.4 491.2 L618.5 491.5 L615.6 491.8 L612.7 492.1 L609.9 492.3 L607.0 492.6 L604.1 492.8 L601.3 493.1 L598.4 493.3 L595.6 493.4 L592.7 493.6 L589.9 493.8 L587.1 493.9 L584.2 494.1 L581.4 494.2 L578.6 494.3 L575.8 494.5 L573.0 494.6 L570.2 494.7 L567.5 494.9 L564.8 495.0 L562.2 495.1" stroke="url(#gwh)" stroke-width="1.5" fill="none"/>
<path d="M794.0 438.1 L792.1 439.2 L789.9 440.4 L787.7 441.7 L785.4 443.0 L782.9 444.4 L780.4 445.8 L777.9 447.2 L775.3 448.6 L772.8 449.9 L770.2 451.2 L767.8 452.4 L765.4 453.6 L763.1 454.7 L760.8 455.8 L758.5 456.8 L756.2 457.7 L753.9 458.7 L751.6 459.6 L749.4 460.5 L747.1 461.4 L744.8 462.3 L742.6 463.2 L740.3 464.1 L738.0 465.0 L735.7 465.9 L733.5 466.8 L731.3 467.7 L729.1 468.6 L726.9 469.5 L724.7 470.3 L722.5 471.2 L720.2 472.0 L717.9 472.9 L715.5 473.7 L713.0 474.5 L710.5 475.3 L707.9 476.1 L705.2 476.9 L702.4 477.6 L699.5 478.4 L696.6 479.2 L693.7 479.9 L690.7 480.6 L687.7 481.3 L684.8 482.0 L681.8 482.7 L678.9 483.3 L676.0 483.9 L673.1 484.5 L670.3 485.0 L667.4 485.6 L664.6 486.1 L661.7 486.6 L658.9 487.0 L656.0 487.5 L653.2 487.9 L650.3 488.4 L647.4 488.8 L644.6 489.2 L641.7 489.6 L638.8 490.0 L635.9 490.4 L633.0 490.8 L630.1 491.1 L627.2 491.5 L624.3 491.8 L621.4 492.2 L621.4 492 L794.5 492 Z" fill="#ef9fc8"/>
<g fill="none" stroke="#d58fc0" stroke-width="0.5" stroke-opacity="0.8"><path d="M794.0 444.5 L792.1 445.6 L789.9 446.8 L787.7 448.1 L785.4 449.4 L782.9 450.8 L780.4 452.2 L777.9 453.6 L775.3 455.0 L772.8 456.3 L770.2 457.6 L767.8 458.8 L765.4 460.0 L763.1 461.1 L760.8 462.2 L758.5 463.2 L756.2 464.1 L753.9 465.1 L751.6 466.0 L749.4 466.9 L747.1 467.8 L744.8 468.7 L742.6 469.6 L740.3 470.5 L738.0 471.4 L735.7 472.3 L733.5 473.2 L731.3 474.1 L729.1 475.0 L726.9 475.9 L724.7 476.7 L722.5 477.6 L720.2 478.4 L717.9 479.3 L715.5 480.1 L713.0 480.9 L710.5 481.7 L707.9 482.5 L705.2 483.3 L702.4 484.0 L699.5 484.8 L696.6 485.6 L693.7 486.3 L690.7 487.0 L687.7 487.7 L684.8 488.4 L681.8 489.1 L678.9 489.7 L676.0 490.3 L673.1 490.9 L670.3 491.4 L667.4 492.0 L664.6 492.5 L661.7 493.0 L658.9 493.4 L656.0 493.9 L653.2 494.3 L650.3 494.8"/><path d="M794.0 451.5 L792.1 452.6 L789.9 453.8 L787.7 455.1 L785.4 456.4 L782.9 457.8 L780.4 459.2 L777.9 460.6 L775.3 462.0 L772.8 463.3 L770.2 464.6 L767.8 465.8 L765.4 467.0 L763.1 468.1 L760.8 469.2 L758.5 470.2 L756.2 471.1 L753.9 472.1 L751.6 473.0 L749.4 473.9 L747.1 474.8 L744.8 475.7 L742.6 476.6 L740.3 477.5 L738.0 478.4 L735.7 479.3 L733.5 480.2 L731.3 481.1 L729.1 482.0 L726.9 482.9 L724.7 483.7 L722.5 484.6 L720.2 485.4 L717.9 486.3 L715.5 487.1 L713.0 487.9 L710.5 488.7 L707.9 489.5 L705.2 490.3 L702.4 491.0 L699.5 491.8 L696.6 492.6 L693.7 493.3 L690.7 494.0"/><path d="M794.0 458.5 L792.1 459.6 L789.9 460.8 L787.7 462.1 L785.4 463.4 L782.9 464.8 L780.4 466.2 L777.9 467.6 L775.3 469.0 L772.8 470.3 L770.2 471.6 L767.8 472.8 L765.4 474.0 L763.1 475.1 L760.8 476.2 L758.5 477.2 L756.2 478.1 L753.9 479.1 L751.6 480.0 L749.4 480.9 L747.1 481.8 L744.8 482.7 L742.6 483.6 L740.3 484.5 L738.0 485.4 L735.7 486.3 L733.5 487.2 L731.3 488.1 L729.1 489.0 L726.9 489.9 L724.7 490.7 L722.5 491.6 L720.2 492.4"/><path d="M794.0 466.5 L792.1 467.6 L789.9 468.8 L787.7 470.1 L785.4 471.4 L782.9 472.8 L780.4 474.2 L777.9 475.6 L775.3 477.0 L772.8 478.3 L770.2 479.6 L767.8 480.8 L765.4 482.0 L763.1 483.1 L760.8 484.2 L758.5 485.2 L756.2 486.1 L753.9 487.1 L751.6 488.0 L749.4 488.9 L747.1 489.8"/></g>
<!--MAP-->
<g clip-path="url(#mapclip)">
<rect x="283.5" y="220" width="427.2" height="252.8" fill="#7ecdf9"/>
<!-- other land -->
<g fill="#f3f0ee" stroke="#b79cc9" stroke-width="0.5">
<path d="M301.4 279.3 L305.7 275.7 L317.1 272.8 L327.1 277.1 L337.1 279.3 L347.1 277.8 L357.1 276.4 L365.6 280.7 L377 286.4 L385.6 293.5 L386.3 297.8 L382.7 298.5 L374.2 307.8 L365.6 317.8 L359.9 322.1 L357.1 327.8 L348.5 329.2 L342.8 330.6 L341.4 326.4 L334.2 321.4 L331.4 317.8 L337.1 310.7 L339.9 306.4 L348.5 307.8 L357.1 306.4 L357.8 302.8 L351.3 299.2 L339.9 298.1 L329.9 299.2 L324.2 303.5 L318.5 308.5 L308.5 310.7 L298.5 309.2 L297.1 306.4 L301.4 300.7 L307.1 295.7 L312.1 289.3 L305 287.8 L300 285 Z"/>
<path d="M283 306 L285.7 305.7 L292.8 303.5 L295.7 306.4 L294.3 310.7 L288.6 312.8 L283 315 Z" stroke="none"/>
<path d="M283 315 L295.7 319.2 L298.5 324.9 L304.3 327.8 L308.5 326.4 L317.1 329.2 L318.5 324.9 L327.1 323.5 L329.9 324.9 L337.1 327.8 L342.8 330.6 L352 336 L352 420 L340 440 L345 473 L283 473 Z"/>
<path d="M330 400 L648 400 L648 447 L655 452 L657.5 461 L654 473 L330 473 Z" stroke="none"/>
<path d="M403.5 250 L408 243 L414 240 L418 246 L424 244 L428.5 252 L425 259 L419 256 L414 261 L410 255 Z" stroke="none"/>
<path d="M676 412 L683 409 L692 411 L694 418 L688 424 L681 425 L677 420 Z" stroke="none"/>
<path d="M684 429 L690 431 L697 442 L704 455 L707 468 L702 473 L694 473 L696 462 L690 450 L684 438 Z" stroke="none"/>
<path d="M651 215 L660 215 L659 222.5 L653 222 Z M670 215 L683 215 L682 223 L674 222.6 Z" stroke="none"/>
</g>
<!-- borders between other countries -->
<g fill="none" stroke="#b79cc9" stroke-width="0.6">
<path d="M312 289 L318 284.5 L330 283.5 L342 283 L352 281 L362 284 L368 288 L372 296 L377 300"/><path d="M358 302.8 L362 296 L368 288"/>
<path d="M283 345 L300 343 L312 348 L324 347"/>
<path d="M283 372 L296 368 L306 372 L318 370"/>
<path d="M283 400 L294 398"/>
<path d="M390 428 L395 445 L388 460 L396 473"/>
<path d="M352 455 L365 452 L380 460 L395 458"/>
<path d="M481 461 L488 465 L500 462 L515 468 L530 473"/>
<path d="M585 442 L580 452 L588 462 L584 473"/>
<path d="M651 448 L646 456 L650 464 L644 473"/>
<path d="M300 438 L310 446 L322 444 L326 452"/>
</g>
<!-- Russia -->
<path fill="#ffedbc" stroke="#c9a6c8" stroke-width="0.6" d="M386.3 297.8 L389.9 303.5 L390.6 313.5 L388.4 320.6 L382.7 324.9 L379.9 322.1 L378.5 315 L375.6 310.7 L372.8 315 L371.3 324.9 L372.8 332 L379.9 331.4 L388.4 329.6 L394.8 332 L397.5 324.5 L399.4 323 L401.2 329.5 L407.7 333.2 L416 335.5 L427.8 338.7 L433.3 335 L440.6 340.5 L445.2 346.5 L447.5 340.2 L453.7 326.8 L457.2 322.8 L460.4 326.8 L456.9 340.2 L453.7 351 L451 357.7 L455 357.7 L460.4 351 L464.4 353.7 L465.7 349.6 L461.7 344.3 L463 332.2 L465.7 326.8 L468.4 329.5 L466.5 340.2 L468.4 347 L470.3 340.2 L471.9 328.2 L476.5 324.1 L477.8 326.8 L477.3 336.2 L479.7 336.2 L481 326.8 L485.9 318.8 L493.9 313.4 L503.3 308 L504.8 302 L509.3 297.5 L516 299 L523.5 307.8 L526 314.2 L521 318 L528.7 318 L541.5 314.2 L545 309 L554 311 L551.9 316.8 L557 314.2 L567.3 307.8 L572.5 298.8 L580.2 292.3 L590.5 289.7 L600.8 283.3 L606 280.7 L613.7 279.4 L613 270 L616.3 266.5 L618.9 262.7 L621.4 253.7 L629.2 243.4 L642 235.6 L647.2 230.5 L654.9 236.9 L654.9 242 L647.2 246 L644.6 253.7 L649.8 260 L660 258.8 L662.7 264 L661.4 274.3 L665.3 284.6 L661.6 290.7 L658.9 297.4 L659.6 304.2 L665.6 310.9 L673.7 314.9 L679.7 322.9 L681.7 331 L685.7 340.4 L687.8 347.1 L679 341.7 L669.6 336.4 L661.6 328.3 L658.9 320.3 L656.9 312.2 L654.2 304.2 L650.9 298.8 L648.2 293.4 L645.5 294.1 L646.2 300.1 L648.8 305.5 L644.2 306.2 L641.5 310.9 L642.1 318.9 L646.2 327 L640.1 333.7 L634.3 341 L628 347.1 L626.6 350.3 L625.3 360.6 L629.2 370.9 L624 381.2 L629.2 385.1 L634.3 383.8 L644.6 386.4 L649.8 391.5 L655 401.9 L657.5 412.2 L660 425 L660 438 L655 445.7 L651 448.2 L647 443 L648.5 427.6 L647.7 417.3 L642 416 L634.3 422.5 L624 422.5 L613.7 417.3 L603.4 410.9 L593 412.2 L588 417.3 L589.2 435.4 L585.4 441.8 L577.6 440.5 L567.3 443.1 L557 441.8 L541.5 443.1 L528.7 445.7 L515.8 443.1 L505.5 448.2 L494.2 453.4 L481.6 461 L466.5 458.4 L451.4 445.8 L441.3 430.7 L431.2 425.7 L411 415.6 L398.4 418.1 L390.9 428.2 L375.8 423.2 L368.2 415.6 L355.6 413.1 L339.2 413.1 L340.5 430.7 L338 435.8 L330 436 L324.1 438.3 L312.8 435.8 L305.2 428.2 L302.7 415.6 L300 410 L296 407 L305.2 406 L312.8 398 L320.3 387.9 L317.8 377.8 L317.8 362.7 L325.4 352.6 L324.2 350 L322.8 344.9 L325.7 339.2 L328.5 333.5 L337 332 L342.8 330.6 L348.5 329.2 L357.1 327.8 L359.9 322.1 L365.6 317.8 L374.2 307.8 L382.7 298.5 Z"/>
<g fill="#ffedbc">
<path d="M422.3 316.7 L425 312 L433.3 308.4 L440.6 303.8 L451.6 299.2 L459 298.3 L459 301 L449.8 304.7 L440.6 309.3 L433.3 313 L428.7 318.5 L427.8 323.1 L424.2 322.2 Z"/>
<path d="M492 281 L496 279 L499 284 L496 289 L493 287 Z M501 288 L506 287 L508.5 292 L504 296 L501 293 Z"/>
<path d="M555 281 L560 277 L565 279 L563 285 L558 288 Z M566 283 L572 281 L571 287 L567 290 Z"/>
<path d="M614 240 L617.5 239.5 L617.6 245 L614.5 246 Z"/>
<path d="M446 266 L448.5 265 L449.5 267.5 L447 268.5 Z M451 268 L454 267 L455 270 L452 271 Z M457 265 L459.5 264.5 L460 267 L457.5 267.5 Z M455 272 L458 271.5 L458.5 274 L456 275 Z M461 269 L463.5 268.5 L464 271.5 L461.5 272 Z" fill="#fdf3d2"/>
<path d="M643.5 373 L646 372 L652 381 L660 390 L668 398 L672 404 L669 403 L660 394 L651 385 L645 377 Z"/>
</g>
<!-- inner seas -->
<g fill="#7ecdf9">
<path d="M283.5 413 L290 410 L297 412 L302 418 L303 428 L300 438 L292 442 L283.5 440 Z"/>
<path d="M286 390 L294 388 L298 395 L302 403 L296 407 L290 402 Z"/>
<path d="M325 436 L331 430 L340 426 L348 428 L350 435 L344 440 L340 448 L342 458 L338 468 L332 473 L312 473 L318 466 L322 455 L321 445 Z"/>
<path d="M366 452 L372 450 L375 455 L372 461 L367 459 Z"/>
<path d="M537.5 441.5 L540 436 L545 428 L549.5 418 L551.5 417.5 L549 428 L544 437 L540 443 Z"/>
</g>
<!-- rivers -->
<g fill="none" stroke="#86c9e8" stroke-width="0.8" stroke-linejoin="round">
<path d="M442.9 357.7 L432.2 369.8 L434.9 388.5 L453.7 402 L467.1 418 L471.1 426.1 L477.8 439.5"/>
<path d="M433.5 388.5 L426.8 402 L434.9 418 L445.6 434.2 L452 444"/>
<path d="M480.5 334.9 L483.2 356.3 L485.9 380.5 L491.2 402 L495.3 418 L497.9 423.4 L493.9 444.9"/>
<path d="M496.6 412.7 L518 407.3 L526.1 418 L534.2 434.2 L539.5 442.2"/>
<path d="M551.6 316.1 L555.6 334.9 L566.4 351 L587.8 357.7 L575 372 L561 380.5 L550.2 391.2 L539.5 412.7 L536.8 426.1 L544.9 434.2"/>
<path d="M520.7 364.4 L539.5 367.1 L550.2 375.1 L561 372"/>
<path d="M598.6 351 L601.2 369.8 L587.8 380.5"/>
<path d="M613.5 280 L609 292 L611 305 L620 318 L622 330 L617 338"/>
<path d="M338 435 L335 425 L328 418 L333 410 L345 405 L358 400 L368 392 L380 388 L392 392 L398 388"/>
<path d="M333 410 L322 404 L318 392 L322 380"/>
<path d="M372.8 332 L378 345 L372 356 L362 360"/>
<path d="M408 333 L410 345 L404 356 L410 366"/>
<path d="M649 391 L640 398 L628 402 L618 410 L606 411 L596 412"/>
<path d="M500 300 L498 312 L503 322"/>
</g>
<path d="M452 357 L447 357.5 L443.5 356.5" stroke="#7ecdf9" stroke-width="1.8" fill="none" stroke-linecap="round"/>
<!-- capitals -->
<rect x="337.6" y="363.7" width="5.4" height="5.2" fill="#ee1c23"/>
<!--MAPTEXT-->
<g fill="#fff" stroke="#555" stroke-width="0.7">
<circle cx="357.5" cy="376.5" r="1.9"/><circle cx="329.5" cy="386.5" r="1.9"/><circle cx="369.5" cy="388.4" r="1.9"/><circle cx="382.5" cy="390" r="1.9"/><circle cx="394" cy="388.5" r="1.9"/>
<circle cx="402.5" cy="400.5" r="1.9"/><circle cx="346.5" cy="401" r="1.9"/><circle cx="363.5" cy="402" r="1.9"/><circle cx="384.5" cy="404" r="1.9"/><circle cx="401.5" cy="410" r="1.9"/>
<circle cx="313.5" cy="406.5" r="1.9"/><circle cx="333" cy="410.5" r="1.9"/><circle cx="437" cy="422.5" r="1.9"/><circle cx="466.5" cy="428" r="1.9"/><circle cx="497.5" cy="423.5" r="1.9"/><circle cx="343.5" cy="334.5" r="1.9"/>
</g>
<g fill="#e8151b">
<rect x="311.5" y="287.5" width="1.6" height="1.6"/><rect x="318.5" y="307" width="1.6" height="1.6"/><rect x="293" y="304" width="1.6" height="1.6"/><rect x="333.5" y="320.5" width="1.6" height="1.6"/><rect x="329.5" y="324" width="1.6" height="1.6"/>
<rect x="299" y="326.5" width="1.6" height="1.6"/><rect x="290.5" y="336.5" width="1.6" height="1.6"/><rect x="309" y="341.5" width="1.6" height="1.6"/><rect x="302" y="369" width="1.6" height="1.6"/><rect x="550.5" y="459.3" width="1.6" height="1.6"/>
<rect x="704.5" y="457" width="1.8" height="1.8"/><rect x="309.5" y="442.5" width="1.5" height="1.5"/><rect x="323.5" y="460.5" width="1.6" height="1.6"/><rect x="304" y="450" width="1.5" height="1.5"/>
</g>
<g stroke="#666" stroke-width="0.5" fill="none"><path d="M393.5 465 L461.5 465 M393.5 463 L393.5 467 M410 463.5 L410 466.5 M427 463.5 L427 466.5 M444 463.5 L444 466.5 M461.5 463 L461.5 467"/></g>
<text class="sea" x="330.4" y="252.0" font-size="5.6" textLength="44.1" lengthAdjust="spacing">NORWEGIAN</text>
<text class="sea" x="346.5" y="259.0" font-size="5.6" textLength="13.0" lengthAdjust="spacingAndGlyphs">SEA</text>
<text class="sea" x="398.4" y="287.0" font-size="5.6" textLength="32.8" lengthAdjust="spacing">BARENTS</text>
<text class="sea" x="408.5" y="294.0" font-size="5.6" textLength="13.0" lengthAdjust="spacingAndGlyphs">SEA</text>
<text class="sea" x="455.0" y="309.8" font-size="5.2" textLength="16.5" lengthAdjust="spacing">KARA</text>
<text class="sea" x="457.5" y="316.3" font-size="5.2" textLength="11.0" lengthAdjust="spacingAndGlyphs">SEA</text>
<text class="sea" x="609.8" y="230.8" font-size="5" textLength="29.7" lengthAdjust="spacing">CHUKCHI</text>
<text class="sea" x="619.0" y="237.3" font-size="5" textLength="11.5" lengthAdjust="spacingAndGlyphs">SEA</text>
<text class="sea" x="584.0" y="263.1" font-size="5" textLength="14.0" lengthAdjust="spacing">EAST</text>
<text class="sea" x="576.3" y="269.1" font-size="5" textLength="29.7" lengthAdjust="spacing">SIBERIAN</text>
<text class="sea" x="586.5" y="275.6" font-size="5" textLength="9.0" lengthAdjust="spacingAndGlyphs">SEA</text>
<text class="sea" x="671.7" y="265.8" font-size="6.6" textLength="29.6" lengthAdjust="spacing">BERING</text>
<text class="sea" x="679.5" y="274.0" font-size="6.6" textLength="14.0" lengthAdjust="spacingAndGlyphs">SEA</text>
<text class="sea" x="523.5" y="294.0" font-size="4.8" textLength="21.9" lengthAdjust="spacing">LAPTEV</text>
<text class="sea" x="530.0" y="300.5" font-size="4.8" textLength="9.0" lengthAdjust="spacingAndGlyphs">SEA</text>
<text class="sea" x="651.5" y="348.1" font-size="5" textLength="10.0" lengthAdjust="spacingAndGlyphs">SEA</text>
<text class="sea" x="653.5" y="355.1" font-size="5" textLength="6.5" lengthAdjust="spacingAndGlyphs">OF</text>
<text class="sea" x="642.0" y="362.4" font-size="5" textLength="31.0" lengthAdjust="spacing">OKHOTSK</text>
<text class="sea" x="661.4" y="455.9" font-size="5" textLength="19.3" lengthAdjust="spacing">SEA OF</text>
<text class="sea" x="662.0" y="462.8" font-size="5" textLength="17.5" lengthAdjust="spacing">JAPAN</text>
<text class="sea" x="297.6" y="320.4" font-size="4" textLength="24.0" lengthAdjust="spacing">BALTIC SEA</text>
<text class="sea" x="285.0" y="422.3" font-size="3.8" textLength="11.4" lengthAdjust="spacing">BLACK</text>
<text class="sea" x="287.0" y="427.8" font-size="3.8" textLength="7.0" lengthAdjust="spacingAndGlyphs">SEA</text>
<text class="cty" x="302.7" y="284.1" font-size="4.6" textLength="26.3" lengthAdjust="spacing">NORWAY</text>
<text class="cty" x="324.0" y="294.2" font-size="4.6" textLength="31.6" lengthAdjust="spacing">SWEDEN</text>
<text class="cty" x="338.0" y="313.1" font-size="4.6" textLength="24.0" lengthAdjust="spacing">FINLAND</text>
<text class="cty" x="283.8" y="335.3" font-size="3.6" textLength="17.6" lengthAdjust="spacing">POLAND</text>
<text class="cty" x="302.7" y="355.2" font-size="3.6" textLength="17.6" lengthAdjust="spacing">BELARUS</text>
<text class="cty" x="287.6" y="381.8" font-size="4.4" textLength="26.4" lengthAdjust="spacing">UKRAINE</text>
<text class="cty" x="363.2" y="448.2" font-size="5.4" textLength="78.1" lengthAdjust="spacing">KAZAKHSTAN</text>
<text class="cty" x="600.8" y="446.8" font-size="5.4" textLength="40.0" lengthAdjust="spacing">CHINA</text>
<text class="cty" x="502.9" y="468.7" font-size="5.4" textLength="69.6" lengthAdjust="spacing">MONGOLIA</text>
<text class="cty" x="680.7" y="449.5" font-size="5.6" textLength="19.3" lengthAdjust="spacing">JAPAN</text>
<text class="cty" x="660.0" y="226.1" font-size="4.6" textLength="9.0" lengthAdjust="spacing">U.S.</text>
<text class="cty" x="285.0" y="445.0" font-size="3.4" textLength="16.4" lengthAdjust="spacing">TURKEY</text>
<text class="cty" x="298.9" y="470.2" font-size="3.4" textLength="10.1" lengthAdjust="spacing">IRAN</text>
<text class="cty" x="355.6" y="465.3" font-size="3.8" textLength="10.1" lengthAdjust="spacing">UZB.</text>
<text class="cty" x="643.5" y="466.1" font-size="3" textLength="10.0" lengthAdjust="spacing">NORTH</text>
<text class="cty" x="643.5" y="470.4" font-size="3" textLength="10.0" lengthAdjust="spacing">KOREA</text>
<text class="cty" x="312.0" y="452.1" font-size="3" textLength="10.0" lengthAdjust="spacing">AZER.</text>
<text class="cty" x="303.0" y="442.0" font-size="2.8" textLength="8.0" lengthAdjust="spacing">GEO.</text>
<text class="cty" x="301.0" y="332.0" font-size="2.8" textLength="8.0" lengthAdjust="spacing">LITH.</text>
<text class="cty" x="318.0" y="332.5" font-size="2.8" textLength="7.0" lengthAdjust="spacing">LAT.</text>
<text class="cty" x="322.0" y="326.0" font-size="2.8" textLength="7.0" lengthAdjust="spacing">EST.</text>
<text class="cap" x="345.0" y="368.5" font-size="5.6" textLength="30.8" lengthAdjust="spacingAndGlyphs">MOSCOW</text>
<text class="cap" x="307.7" y="312.6" font-size="3.2" textLength="21.3" lengthAdjust="spacingAndGlyphs">STOCKHOLM</text>
<text class="cap" x="285.0" y="308.8" font-size="3.2" textLength="24.0" lengthAdjust="spacingAndGlyphs">COPENHAGEN</text>
<text class="cap" x="331.7" y="319.4" font-size="3.2" textLength="15.1" lengthAdjust="spacingAndGlyphs">HELSINKI</text>
<text class="cap" x="316.0" y="287.5" font-size="2.8" textLength="8.0" lengthAdjust="spacingAndGlyphs">OSLO</text>
<text class="cap" x="292.6" y="370.8" font-size="3" textLength="8.8" lengthAdjust="spacingAndGlyphs">KIEV</text>
<text class="cap" x="522.0" y="461.2" font-size="3" textLength="27.0" lengthAdjust="spacingAndGlyphs">ULAANBAATAR</text>
<text class="cap" x="694.9" y="455.8" font-size="3" textLength="9.1" lengthAdjust="spacingAndGlyphs">TOKYO</text>
<text class="cap" x="286.0" y="340.4" font-size="2.6" textLength="12.0" lengthAdjust="spacingAndGlyphs">WARSAW</text>
<text class="cap" x="305.0" y="345.9" font-size="2.6" textLength="9.0" lengthAdjust="spacingAndGlyphs">MINSK</text>
<text class="cap" x="296.0" y="324.4" font-size="2.6" textLength="7.0" lengthAdjust="spacingAndGlyphs">RIGA</text>
<text class="cap" x="327.0" y="322.4" font-size="2.6" textLength="10.0" lengthAdjust="spacingAndGlyphs">TALLINN</text>
<text class="cap" x="288.0" y="449.3" font-size="2.4" textLength="10.0" lengthAdjust="spacingAndGlyphs">ANKARA</text>
<text class="cap" x="318.0" y="457.3" font-size="2.4" textLength="7.0" lengthAdjust="spacingAndGlyphs">BAKU</text>
<text class="cit" x="392.0" y="242.5" font-size="3.7" textLength="14.0" lengthAdjust="spacingAndGlyphs">Svalbard</text>
<text class="cit" x="392.0" y="246.1" font-size="3.7" textLength="14.0" lengthAdjust="spacingAndGlyphs">(NORWAY)</text>
<text class="cit" x="444.0" y="260.8" font-size="3.7" textLength="21.0" lengthAdjust="spacingAndGlyphs">Franz Josef</text>
<text class="cit" x="450.0" y="264.8" font-size="3.7" textLength="9.0" lengthAdjust="spacingAndGlyphs">Land</text>
<text class="cit" x="435.0" y="293.6" font-size="3.7" textLength="11.5" lengthAdjust="spacingAndGlyphs">Novaya</text>
<text class="cit" x="435.0" y="297.6" font-size="3.7" textLength="11.5" lengthAdjust="spacingAndGlyphs">Zemlya</text>
<text class="cit" x="388.4" y="305.8" font-size="3.7" textLength="15.1" lengthAdjust="spacingAndGlyphs">Murmansk</text>
<text class="cit" x="336.0" y="339.8" font-size="3.7" textLength="9.0" lengthAdjust="spacingAndGlyphs">Saint</text>
<text class="cit" x="334.0" y="343.9" font-size="3.7" textLength="14.0" lengthAdjust="spacingAndGlyphs">Petersburg</text>
<text class="cit" x="372.0" y="338.5" font-size="3.7" textLength="19.0" lengthAdjust="spacingAndGlyphs">Arkhangelsk</text>
<text class="cit" x="475.3" y="326.3" font-size="3.7" textLength="8.7" lengthAdjust="spacingAndGlyphs">Dikson</text>
<text class="cit" x="598.0" y="242.1" font-size="3.7" textLength="13.0" lengthAdjust="spacingAndGlyphs">Wrangel</text>
<text class="cit" x="601.0" y="246.1" font-size="3.7" textLength="9.0" lengthAdjust="spacingAndGlyphs">Island</text>
<text class="cit" x="657.5" y="242.8" font-size="3.7" textLength="16.8" lengthAdjust="spacingAndGlyphs">Provideniya</text>
<text class="cit" x="618.9" y="262.7" font-size="3.7" textLength="7.7" lengthAdjust="spacingAndGlyphs">Pevek</text>
<text class="cit" x="638.0" y="258.8" font-size="3.7" textLength="9.0" lengthAdjust="spacingAndGlyphs">Anadyr</text>
<text class="cit" x="615.0" y="282.5" font-size="3.7" textLength="13.0" lengthAdjust="spacingAndGlyphs">Chersky</text>
<text class="cit" x="551.0" y="271.9" font-size="3.7" textLength="6.0" lengthAdjust="spacingAndGlyphs">New</text>
<text class="cit" x="547.0" y="275.9" font-size="3.7" textLength="14.0" lengthAdjust="spacingAndGlyphs">Siberian</text>
<text class="cit" x="548.0" y="279.9" font-size="3.7" textLength="12.0" lengthAdjust="spacingAndGlyphs">Islands</text>
<text class="cit" x="500.0" y="279.8" font-size="3.7" textLength="18.0" lengthAdjust="spacingAndGlyphs">Severnaya</text>
<text class="cit" x="503.0" y="284.1" font-size="3.7" textLength="12.0" lengthAdjust="spacingAndGlyphs">Zemlya</text>
<text class="cit" x="549.0" y="318.9" font-size="3.7" textLength="6.7" lengthAdjust="spacingAndGlyphs">Tiksi</text>
<text class="cit" x="639.5" y="338.3" font-size="3.7" textLength="12.9" lengthAdjust="spacingAndGlyphs">Magadan</text>
<text class="cit" x="362.0" y="375.6" font-size="3.7" textLength="12.0" lengthAdjust="spacingAndGlyphs">Nizhny</text>
<text class="cit" x="360.6" y="379.9" font-size="3.7" textLength="20.2" lengthAdjust="spacingAndGlyphs">Novgorod</text>
<text class="cit" x="324.0" y="383.6" font-size="3.7" textLength="17.7" lengthAdjust="spacingAndGlyphs">Voronezh</text>
<text class="cit" x="354.3" y="389.2" font-size="3.7" textLength="12.7" lengthAdjust="spacingAndGlyphs">Kazan</text>
<text class="cit" x="375.3" y="387.3" font-size="3.7" textLength="14.3" lengthAdjust="spacingAndGlyphs">Izhevsk</text>
<text class="cit" x="398.0" y="389.2" font-size="3.7" textLength="9.3" lengthAdjust="spacingAndGlyphs">Perm</text>
<text class="cit" x="387.9" y="397.3" font-size="3.7" textLength="29.4" lengthAdjust="spacingAndGlyphs">Yekaterinburg</text>
<text class="cit" x="330.4" y="399.3" font-size="3.7" textLength="15.1" lengthAdjust="spacingAndGlyphs">Saratov</text>
<text class="cit" x="356.9" y="407.3" font-size="3.7" textLength="15.1" lengthAdjust="spacingAndGlyphs">Samara</text>
<text class="cit" x="375.8" y="402.5" font-size="3.7" textLength="6.2" lengthAdjust="spacingAndGlyphs">Ufa</text>
<text class="cit" x="404.7" y="408.8" font-size="3.7" textLength="24.0" lengthAdjust="spacingAndGlyphs">Chelyabinsk</text>
<text class="cit" x="415.0" y="415.3" font-size="3.7" textLength="12.0" lengthAdjust="spacingAndGlyphs">Kurgan</text>
<text class="cit" x="304.7" y="411.9" font-size="3.7" textLength="13.1" lengthAdjust="spacingAndGlyphs">Rostov</text>
<text class="cit" x="317.8" y="416.1" font-size="3.7" textLength="21.4" lengthAdjust="spacingAndGlyphs">Volgograd</text>
<text class="cit" x="440.0" y="423.2" font-size="3.7" textLength="11.4" lengthAdjust="spacingAndGlyphs">Omsk</text>
<text class="cit" x="465.2" y="433.3" font-size="3.7" textLength="24.0" lengthAdjust="spacingAndGlyphs">Novosibirsk</text>
<text class="cit" x="401.0" y="353.1" font-size="3.7" textLength="12.6" lengthAdjust="spacingAndGlyphs">Pechora</text>
<text class="cit" x="428.7" y="354.3" font-size="3.7" textLength="16.3" lengthAdjust="spacingAndGlyphs">Salekhard</text>
<text class="cit" x="482.9" y="358.3" font-size="3.7" textLength="10.1" lengthAdjust="spacingAndGlyphs">Igarka</text>
<text class="cit" x="379.5" y="358.3" font-size="3.7" textLength="11.5" lengthAdjust="spacingAndGlyphs">Kotlas</text>
<text class="cit" x="358.0" y="355.2" font-size="3.7" textLength="14.0" lengthAdjust="spacingAndGlyphs">Vologda</text>
<text class="cit" x="436.0" y="393.0" font-size="3.7" textLength="11.6" lengthAdjust="spacingAndGlyphs">Surgut</text>
<text class="cit" x="474.0" y="422.8" font-size="3.7" textLength="10.0" lengthAdjust="spacingAndGlyphs">Tomsk</text>
<text class="cit" x="320.3" y="429.0" font-size="3.7" textLength="15.1" lengthAdjust="spacingAndGlyphs">Astrakhan</text>
<text class="cit" x="499.0" y="428.9" font-size="3.7" textLength="24.5" lengthAdjust="spacingAndGlyphs">Krasnoyarsk</text>
<text class="cit" x="374.5" y="416.1" font-size="3.7" textLength="16.5" lengthAdjust="spacingAndGlyphs">Orenburg</text>
<text class="cit" x="384.0" y="423.3" font-size="3.7" textLength="7.0" lengthAdjust="spacingAndGlyphs">Orsk</text>
<text class="cit" x="328.0" y="372.8" font-size="3.7" textLength="10.0" lengthAdjust="spacingAndGlyphs">Ryazan</text>
<text class="cit" x="340.0" y="392.8" font-size="3.7" textLength="9.0" lengthAdjust="spacingAndGlyphs">Penza</text>
<text class="cit" x="492.0" y="411.8" font-size="3.7" textLength="15.0" lengthAdjust="spacingAndGlyphs">Lesosibirsk</text>
<text class="cit" x="502.0" y="418.8" font-size="3.7" textLength="8.0" lengthAdjust="spacingAndGlyphs">Kansk</text>
<text class="cit" x="513.0" y="418.1" font-size="3.7" textLength="9.0" lengthAdjust="spacingAndGlyphs">Bratsk</text>
<text class="cit" x="626.6" y="352.9" font-size="3.7" textLength="14.2" lengthAdjust="spacingAndGlyphs">Okhotsk</text>
<text class="cit" x="586.6" y="359.9" font-size="3.7" textLength="12.9" lengthAdjust="spacingAndGlyphs">Yakutsk</text>
<text class="cit" x="566.0" y="365.3" font-size="3.7" textLength="13.0" lengthAdjust="spacingAndGlyphs">Vilyuysk</text>
<text class="cit" x="545.4" y="387.2" font-size="3.7" textLength="9.0" lengthAdjust="spacingAndGlyphs">Lensk</text>
<text class="cit" x="589.2" y="383.8" font-size="3.7" textLength="9.0" lengthAdjust="spacingAndGlyphs">Aldan</text>
<text class="cit" x="590.5" y="392.8" font-size="3.7" textLength="15.5" lengthAdjust="spacingAndGlyphs">Neryungri</text>
<text class="cit" x="595.7" y="401.1" font-size="3.7" textLength="9.0" lengthAdjust="spacingAndGlyphs">Tynda</text>
<text class="cit" x="585.4" y="408.8" font-size="3.7" textLength="9.0" lengthAdjust="spacingAndGlyphs">Never</text>
<text class="cit" x="618.9" y="396.8" font-size="3.7" textLength="15.4" lengthAdjust="spacingAndGlyphs">Berezovyy</text>
<text class="cit" x="620.0" y="405.3" font-size="3.7" textLength="9.0" lengthAdjust="spacingAndGlyphs">Urgal</text>
<text class="cit" x="635.6" y="403.9" font-size="3.7" textLength="19.4" lengthAdjust="spacingAndGlyphs">Komsomolsk</text>
<text class="cit" x="642.0" y="412.2" font-size="3.7" textLength="16.8" lengthAdjust="spacingAndGlyphs">Khabarovsk</text>
<text class="cit" x="622.7" y="416.0" font-size="3.7" textLength="18.1" lengthAdjust="spacingAndGlyphs">Birobidzhan</text>
<text class="cit" x="637.0" y="375.3" font-size="3.7" textLength="6.4" lengthAdjust="spacingAndGlyphs">Okha</text>
<text class="cit" x="658.0" y="378.8" font-size="3.7" textLength="13.0" lengthAdjust="spacingAndGlyphs">Sakhalin</text>
<text class="cit" x="660.0" y="382.5" font-size="3.7" textLength="9.0" lengthAdjust="spacingAndGlyphs">Island</text>
<text class="cit" x="673.0" y="396.1" font-size="3.7" textLength="12.0" lengthAdjust="spacingAndGlyphs">Yuzhno-</text>
<text class="cit" x="671.7" y="400.1" font-size="3.7" textLength="16.8" lengthAdjust="spacingAndGlyphs">Sakhalinsk</text>
<text class="cit" x="568.6" y="431.0" font-size="3.7" textLength="7.7" lengthAdjust="spacingAndGlyphs">Chita</text>
<text class="cit" x="575.0" y="435.9" font-size="3.7" textLength="10.4" lengthAdjust="spacingAndGlyphs">Borzya</text>
<text class="cit" x="524.8" y="440.5" font-size="3.7" textLength="10.2" lengthAdjust="spacingAndGlyphs">Irkutsk</text>
<text class="cit" x="548.0" y="442.6" font-size="3.7" textLength="10.3" lengthAdjust="spacingAndGlyphs">Ulan-Ude</text>
<text class="cit" x="651.9" y="447.7" font-size="3.7" textLength="18.5" lengthAdjust="spacingAndGlyphs">Vladivostok</text>
<text class="cit" x="478.0" y="441.3" font-size="3.7" textLength="11.0" lengthAdjust="spacingAndGlyphs">Barnaul</text>
<text class="cit" x="500.0" y="447.3" font-size="3.7" textLength="8.0" lengthAdjust="spacingAndGlyphs">Kyzyl</text>
<text class="cit" x="318.0" y="359.3" font-size="3.7" textLength="12.0" lengthAdjust="spacingAndGlyphs">Smolensk</text>
<text class="cit" x="284.0" y="330.8" font-size="3.7" textLength="15.0" lengthAdjust="spacingAndGlyphs">Kaliningrad</text>
<text class="cit" x="285.0" y="408.8" font-size="3.7" textLength="12.0" lengthAdjust="spacingAndGlyphs">Crimean</text>
<text class="cit" x="285.0" y="412.3" font-size="3.7" textLength="13.0" lengthAdjust="spacingAndGlyphs">Peninsula</text>
<text class="lake" x="552.0" y="423.8" font-size="3.6" textLength="7.0" lengthAdjust="spacingAndGlyphs">Lake</text>
<text class="lake" x="551.5" y="427.8" font-size="3.6" textLength="9.5" lengthAdjust="spacingAndGlyphs">Baikal</text>
<text class="lake" x="379.5" y="463.2" font-size="3.4" textLength="6.5" lengthAdjust="spacingAndGlyphs">Aral</text>
<text class="lake" x="380.0" y="467.2" font-size="3.4" textLength="5.0" lengthAdjust="spacingAndGlyphs">Sea</text>
<text class="rus" y="381.5" font-size="21"><tspan x="408">R</tspan><tspan x="435">U</tspan><tspan x="468">S</tspan><tspan x="495.5">S</tspan><tspan x="523.3">I</tspan><tspan x="544.5">A</tspan></text>
<path id="arc" d="M438 238.5 Q 488 262 540 234" fill="none"/>
<text class="sea" font-size="8.2" letter-spacing="3.6"><textPath href="#arc">ARCTIC OCEAN</textPath></text>
<text class="cit" font-size="3.4" transform="translate(660.5,314) rotate(52)">Kamchatka Peninsula</text>
<text class="sea" font-size="4" letter-spacing="0.6" transform="translate(330,468) rotate(-62)">CASPIAN SEA</text>
<!--/MAPTEXT-->
</g>
<!--/MAP-->
<text x="300.6" y="200.4" font-family="'Liberation Sans',sans-serif" font-weight="bold" font-size="26" fill="#000" stroke="#000" stroke-width="0.9" textLength="394.4" lengthAdjust="spacingAndGlyphs">Перспективы исследования</text>

</svg>
<!--/SLIDE-->
<!--STATUS-->
<!-- status bar -->
<div class="a" style="left:1px;top:500.2px;width:869px;height:2px;background:#dedde0;"></div>
<div class="a" style="left:649px;top:502.4px;width:22.7px;height:13.6px;background:#cfcfcf;"></div>
<div class="t" style="left:6.3px;top:505.8px;font-size:6.9px;color:#555;">Слайд 24 из 25</div>
<div class="t" style="left:87px;top:505.6px;font-size:7.3px;color:#555;">русский</div>
<div class="t" style="left:541px;top:505.6px;font-size:7.3px;color:#555;">Заметки</div>
<div class="t" style="left:592.8px;top:505.6px;font-size:7.5px;color:#555;">Примечания</div>
<div class="t" style="left:836.4px;top:505.8px;font-size:6.6px;color:#555;">73%</div>
<svg class="a" style="left:0;top:502px" width="873" height="15" viewBox="0 502 873 15">
<g fill="none" stroke="#666" stroke-width="0.7">
<path d="M67.4 505.4 H71 V512.6 H67.4 Z M71 505.4 H74.6 V509 M71 512.6 H73"/><path d="M73.6 511.4 L75 512.8 L77.4 509.6"/>
<path d="M531.6 512.4 H538 M532.4 510.6 H537.2 M533.4 508.8 H536.2 M534.8 505.6 V507.6"/>
<rect x="656" y="505" width="8.6" height="8"/><rect x="657.6" y="506.6" width="3" height="2.6"/><path d="M657.6 511 H663"/>
<rect x="681" y="505.2" width="3" height="3"/><rect x="685.6" y="505.2" width="3" height="3"/><rect x="681" y="509.8" width="3" height="3"/><rect x="685.6" y="509.8" width="3" height="3"/>
<path d="M704.4 506 Q706.4 505 708.4 506 Q710.4 505 712.4 506 V512.4 Q710.4 511.4 708.4 512.4 Q706.4 511.4 704.4 512.4 Z M708.4 506 V512.4"/>
<path d="M727.6 505.4 H736.4 M728.4 505.4 V509.6 H735.6 V505.4 M732 509.6 V512 M730 512.8 H734"/>
<path d="M747.4 509.2 H752.2 M755.3 509.2 H818.5 M821.6 509.2 H826.4 M824 506.8 V511.6 M786.8 508 V510.4"/>
<rect x="857.4" y="505" width="8.4" height="8.4"/><path d="M859 508 V506.6 H860.4 M862.8 506.6 H864.2 V508 M864.2 510.4 V511.8 H862.8 M860.4 511.8 H859 V510.4"/>
</g>
<rect x="581.6" y="505.2" width="7.6" height="5.4" fill="#555"/><path d="M583 510.4 V513 L585.6 510.4 Z" fill="#555"/>
<rect x="776.4" y="505" width="2" height="8.4" fill="#555"/>
</svg>
<!-- taskbar -->
<div class="a" style="left:1px;top:516.4px;width:30.5px;height:25.6px;background:#223a4a;"></div>
<div class="a" style="left:31.5px;top:516.4px;width:218.7px;height:25.6px;background:#f2f2f2;"></div>
<div class="a" style="left:314.4px;top:516.4px;width:30.2px;height:25.6px;background:#34414f;"></div>
<div class="a" style="left:344.6px;top:516.4px;width:31.4px;height:25.6px;background:#c47a35;"></div>
<div class="a" style="left:376px;top:516.4px;width:31px;height:25.6px;background:#3c4856;"></div>
<div class="a" style="left:285.4px;top:540.8px;width:25.6px;height:1.2px;background:#6fa8dc;"></div>
<div class="a" style="left:316px;top:540.8px;width:27px;height:1.2px;background:#6fa8dc;"></div>
<div class="a" style="left:377.6px;top:540.8px;width:28px;height:1.2px;background:#6fa8dc;"></div>
<div class="t" style="left:57.4px;top:524.8px;font-size:9.3px;color:#555;">Введите здесь текст для поиска</div>
<div class="t" style="left:758.6px;top:518.6px;font-size:10.7px;color:#7c8996;">Активация Windows</div>
<div class="t" style="left:761px;top:531.8px;font-size:7.2px;color:#707d8b;">Чтобы акт<span style="color:#cfd6dc">21.01.2022</span>ь Windows.</div>
<div class="t" style="left:809px;top:519.4px;font-size:7px;color:#e8ecef;">9:58</div>
<div class="t" style="left:774.6px;top:526.2px;font-size:7.4px;color:#f0f0f0;">РУС</div>
<svg class="a" style="left:0;top:516px" width="873" height="27" viewBox="0 516 873 27">
<g fill="#fff"><rect x="10.6" y="523.4" width="4.8" height="4.8"/><rect x="16.2" y="523.4" width="4.8" height="4.8"/><rect x="10.6" y="529" width="4.8" height="4.8"/><rect x="16.2" y="529" width="4.8" height="4.8"/></g>
<circle cx="23.2" cy="526.6" r="7.8" fill="none" stroke="#3c5364" stroke-width="0.9"/><text x="21.2" y="532.4" font-family="'Liberation Sans',sans-serif" font-size="14" fill="#3c5364">S</text>
<g fill="none" stroke="#444" stroke-width="1"><circle cx="45.8" cy="527.6" r="3.2"/><path d="M43.6 530 L39.6 534.4"/></g>
<g fill="none" stroke="#fff" stroke-width="1"><rect x="262.6" y="525.4" width="5.4" height="7.6"/><path d="M260.4 524 V534.4 M270.2 524 V534.4 M272.4 526.4 V528 M272.4 530.4 V532"/></g>
<!-- edge -->
<circle cx="298" cy="529" r="7.4" fill="#1c8fd8"/><path d="M291.4 531 Q292 523 299 522.2 Q305.4 522.6 305.4 528.4 Q305.2 531.6 301 531.4 L297 531.2 Q298 535.6 303.6 534.4 Q299 538.4 294.4 535.4 Q292 533.6 291.4 531 Z" fill="#3fd08a" fill-opacity="0.85"/><path d="M296 531 Q296.6 526.6 301 526.6 Q304.6 527 304.6 529.6 Q304 531.2 301 531.2 Z" fill="#0d58a8"/>
<!-- explorer -->
<path d="M322 523.6 H327 L328.6 525.2 H337 V534.6 H322 Z" fill="#f5c445"/><rect x="322" y="527" width="15" height="7.6" fill="#fbd86a"/><rect x="326.4" y="530.4" width="6.4" height="4.2" fill="#3a86d8"/>
<!-- skype -->
<circle cx="358.4" cy="527.6" r="6.6" fill="#1aa3e8"/><circle cx="354.6" cy="524.4" r="3.4" fill="#1aa3e8"/><circle cx="362.4" cy="531.4" r="3.4" fill="#1aa3e8"/>
<text x="355.6" y="531.4" font-family="'Liberation Sans',sans-serif" font-weight="bold" font-size="10" fill="#fff">S</text><circle cx="364.2" cy="533" r="3.4" fill="#f03a2e"/><rect x="363.8" y="531" width="0.9" height="3.8" fill="#fff"/>
<path d="M367 530.6 V540.4 L369.4 538.2 L371 541.6 L372.4 541 L370.8 537.6 H373.8 Z" fill="#fff" stroke="#222" stroke-width="0.5"/>
<!-- ppt -->
<rect x="389.6" y="522" width="10" height="13" fill="#e9683f"/><rect x="384.4" y="523.6" width="9" height="10" fill="#c8411f"/><path d="M394 526 H398.4 M394 528.6 H398.4 M394 531.2 H398.4" stroke="#f6c2ae" stroke-width="0.9"/><text x="386.2" y="531.6" font-family="'Liberation Sans',sans-serif" font-weight="bold" font-size="8" fill="#fff">P</text>
<!-- tray -->
<circle cx="612.6" cy="529.8" r="6.2" fill="#1e88e0" stroke="#d6ebfb" stroke-width="0.9"/>
<circle cx="617.6" cy="533.6" r="1.6" fill="#9fd0f4"/><text x="609.6" y="533.6" font-family="'Liberation Sans',sans-serif" font-weight="bold" font-size="10.5" fill="#fff">?</text>
<g fill="none" stroke="#fff" stroke-width="1"><path d="M630.6 531.4 L634.4 527.6 L638.2 531.4"/></g>
<rect x="652.2" y="523.6" width="3.8" height="7" rx="1.9" fill="#e4e8ec"/><path d="M650.6 529 Q650.6 533 654.1 533 Q657.6 533 657.6 529 M654.1 533 V535.4" stroke="#e4e8ec" stroke-width="0.8" fill="none"/>
<g fill="none" stroke="#e4e8ec" stroke-width="0.9"><rect x="670.4" y="525" width="8.6" height="7.4"/><circle cx="674" cy="528" r="1.2"/></g><circle cx="679.2" cy="532.8" r="2" fill="#f0962a"/>
<rect x="689" y="527" width="10" height="5.2" fill="#e4e8ec"/><rect x="699" y="528.4" width="1.2" height="2.4" fill="#e4e8ec"/><path d="M690.6 525.4 V527" stroke="#e4e8ec" stroke-width="1"/>
<g fill="none" stroke="#e4e8ec" stroke-width="0.9"><rect x="712.6" y="525.4" width="8.4" height="5.8"/><path d="M711 527 V534.6 H715 M716.8 531.2 V533.6"/></g>
<path d="M731 528.2 H733 L736 525.6 V534.4 L733 531.8 H731 Z" fill="#e4e8ec"/><path d="M738 527.6 Q739.6 530 738 532.4 M740 526 Q742.6 530 740 534" stroke="#e4e8ec" stroke-width="0.7" fill="none"/>
<path d="M755 535 Q754 531 757 528 L760.6 523.6 L762.6 525 L759.6 529.6 Q757.6 532.6 755 535 Z M753 535.6 Q757 536.6 760 534" stroke="#e4e8ec" stroke-width="0.8" fill="none"/>
</svg>
<!-- bottom bar -->
<svg class="a" style="left:0;top:516px" width="873" height="80" viewBox="0 516 873 80">
<rect x="799" y="529" width="27" height="47" rx="13.5" fill="#c9c9cd" fill-opacity="0.86"/>
<path d="M813 571.6 Q806.4 566.6 806.4 563.2 Q806.4 560.4 809.4 560.4 Q811.6 560.4 813 562.6 Q814.4 560.4 816.6 560.4 Q819.6 560.4 819.6 563.2 Q819.6 566.6 813 571.6 Z" fill="#f08c8c"/>
<circle cx="826.6" cy="572.8" r="5" fill="#2a7fe0"/><path d="M824.4 575 L825 573 L828 570 L829.4 571.4 L826.4 574.4 Z" fill="#fff"/>
<circle cx="853.2" cy="533.2" r="8.1" fill="#fff"/>
<g fill="none" stroke="#fff" stroke-width="0.9">
<path d="M17 566.6 V570.6 H23 V566.6 M20 568.4 V561.4 M17.6 563.6 L20 561.2 L22.4 563.6"/>
<circle cx="58" cy="566" r="4.6"/>
<circle cx="93.6" cy="563.4" r="1.9"/><circle cx="98.4" cy="563.4" r="1.6"/><path d="M90.6 570.6 Q90.6 566.6 93.6 566.6 Q96.6 566.6 96.6 570.6 Z M97.6 566.6 Q100.8 566.4 100.8 569.6 H98"/>
<rect x="731.4" y="562" width="9.4" height="7.4" rx="1"/><path d="M736.1 567.6 V564 M734.6 565.4 L736.1 563.8 L737.6 565.4"/>
<path d="M770.6 566.4 V562.6 Q771.3 561.6 772 562.6 V561.2 Q772.8 560.2 773.6 561.2 V561.6 Q774.4 560.8 775.2 561.8 V563 Q776 562.4 776.6 563.4 V567.6 Q776.2 571.4 773.4 571.4 Q771.4 571.4 770.2 569.4 L768.8 566.8 Q769.6 565.6 770.6 566.4 Z"/>
</g>
<circle cx="58" cy="566" r="2.6" fill="#fff"/>
<g fill="#fff"><circle cx="847.6" cy="565.7" r="0.8"/><circle cx="851" cy="565.7" r="0.8"/><circle cx="854.4" cy="565.7" r="0.8"/></g>
<circle cx="389.2" cy="569.8" r="10.8" fill="#fff"/><circle cx="435.6" cy="569.8" r="10.8" fill="#fff"/><circle cx="481.6" cy="569.8" r="11" fill="#f0373a"/>
<circle cx="697.6" cy="565.7" r="10.4" fill="#fff"/>
<rect x="387.4" y="564.8" width="3.6" height="6.4" rx="1.8" fill="#444"/><path d="M385.8 569.6 Q385.8 573 389.2 573 Q392.6 573 392.6 569.6 M389.2 573 V575" stroke="#444" stroke-width="0.8" fill="none"/>
<g fill="none" stroke="#444" stroke-width="0.9"><rect x="431" y="566.8" width="6.4" height="6" rx="1"/><path d="M437.4 569 L440.2 567.2 V572.4 L437.4 570.6"/></g>
<g fill="none" stroke="#9a9a9e" stroke-width="0.9"><path d="M407.8 571 L410 568.8 L412.2 571 M454.1 571 L456.3 568.8 L458.5 571"/></g>
<path d="M420 562 V578 M465.8 562 V578" stroke="#4a4a4e" stroke-width="0.7"/>
<path d="M476.6 571.4 Q476.2 568.6 481.6 568.4 Q487 568.6 486.6 571.4 L484.4 571.6 L484 570 Q481.6 569.4 479.2 570 L478.8 571.6 Z" fill="#fff"/>
<g fill="none" stroke="#444" stroke-width="0.9"><path d="M693 565.4 Q693 561.6 697.6 561.6 Q702.2 561.6 702.2 565.4 Q702.2 569.2 697.6 569.2 Q696.4 569.2 695.4 568.8 L693.4 570 L694 568 Q693 567 693 565.4 Z"/><circle cx="697.6" cy="565.4" r="1.4"/></g>
<g font-family="'Liberation Sans',sans-serif" font-weight="bold" font-size="6.2" fill="#fff">
<text x="3.8" y="583.6" textLength="32" lengthAdjust="spacingAndGlyphs">Пригласить</text>
<text x="45.3" y="583.6" textLength="25.2" lengthAdjust="spacingAndGlyphs">Записать</text>
<text x="81.9" y="583.6" textLength="28.4" lengthAdjust="spacingAndGlyphs">Участники</text>
<text x="693" y="583.6" textLength="9.8" lengthAdjust="spacingAndGlyphs">Чат</text>
<text x="716.4" y="583.6" textLength="35" lengthAdjust="spacingAndGlyphs">Демонстра...</text>
<text x="756" y="583.6" textLength="36.4" lengthAdjust="spacingAndGlyphs">Поднять руку</text>
<text x="792.8" y="583.6" textLength="39.6" lengthAdjust="spacingAndGlyphs">Отреагировать</text>
<text x="846" y="583.6" textLength="10.5" lengthAdjust="spacingAndGlyphs">Еще</text>
</g>
<text x="848.6" y="535.6" font-family="'Liberation Sans',sans-serif" font-size="6.6" fill="#222">1x</text>
<!-- partial avatars bottom strip -->
<g fill="#6f7074"><circle cx="406.4" cy="611" r="16.3"/></g>
<circle cx="447.9" cy="611" r="16.3" fill="#f6cfa0"/><circle cx="488.9" cy="611" r="16.3" fill="#fdf3ee"/>
<g fill="#7b7f8a"><circle cx="530" cy="611" r="16.3"/><circle cx="571.4" cy="611" r="16.3"/><circle cx="654.5" cy="611" r="16.3"/><circle cx="695.5" cy="611" r="16.3"/></g>
<g fill="#b5a08c"><circle cx="612.7" cy="611" r="16.3"/><circle cx="737.6" cy="611" r="16.3"/><circle cx="778.6" cy="611" r="16.3"/></g>
<rect x="803.5" y="594.6" width="58.5" height="10" rx="4" fill="#b9bbbd"/>
</svg>
<!--/STATUS-->
<!--TASKBAR-->
<!--BOTTOM-->
<div class="a" id="rstrip"></div>
<div class="a" id="lstrip"></div>
<div class="a" id="topline"></div>
</div>
</body>
</html>
